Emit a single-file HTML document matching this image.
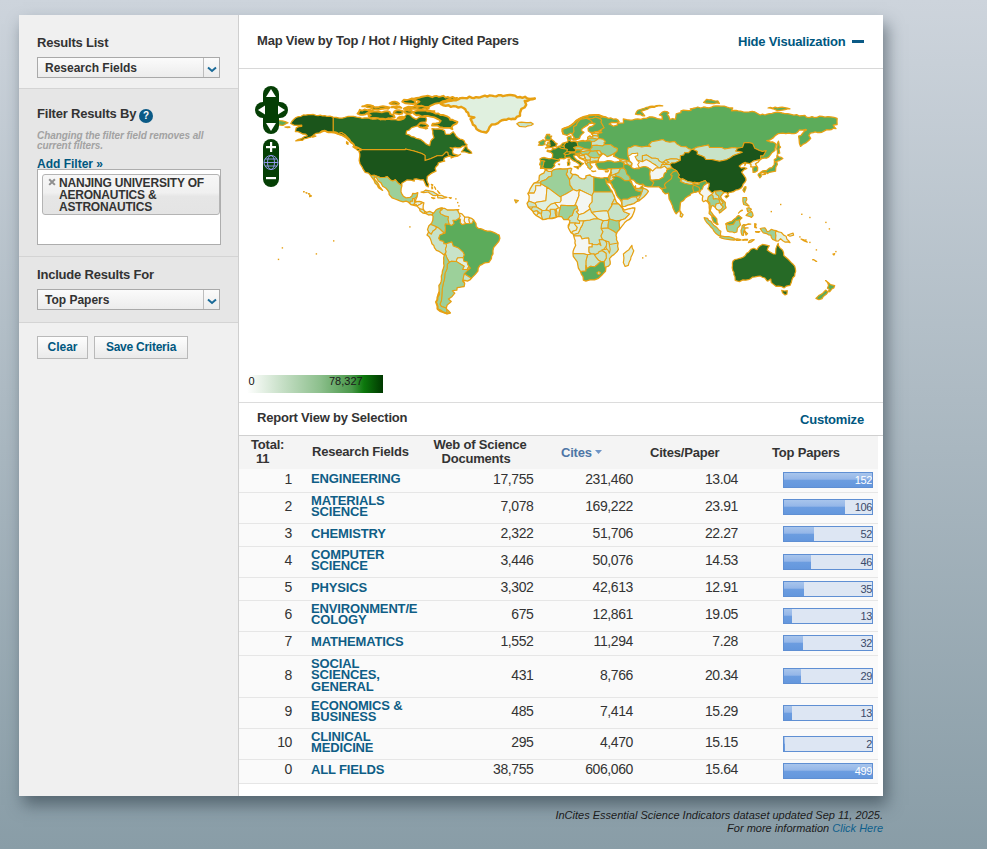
<!DOCTYPE html>
<html><head><meta charset="utf-8">
<style>
*{margin:0;padding:0;box-sizing:border-box}
html,body{width:987px;height:849px;overflow:hidden}
body{font-family:"Liberation Sans",sans-serif;color:#333;background:linear-gradient(to bottom,#cdd4dc 0%,#899da7 100%);position:relative}
.abs{position:absolute;white-space:nowrap}
#panel{position:absolute;left:19px;top:15px;width:864px;height:781px;background:#fff;box-shadow:4px 9px 15px rgba(40,55,65,.55)}
#side{position:absolute;left:0;top:0;width:220px;height:781px;background:#f0f0f0;border-right:1px solid #cfcfcf}
.sec{position:absolute;left:0;width:219px}
.h{font-weight:bold;font-size:13px;color:#333;letter-spacing:-0.2px}
.sel{position:absolute;left:18px;width:183px;height:21px;border:1px solid #a9a9a9;background:linear-gradient(#fbfbfb,#ececec)}
.sel span{position:absolute;left:7px;top:3px;font-size:12px;font-weight:bold;color:#333}
.sel i{position:absolute;right:0;top:0;width:16px;height:19px;border-left:1px solid #bdbdbd}
.blue{color:#00577f}
.btn{position:absolute;height:23px;border:1px solid #b9b9b9;background:linear-gradient(#fdfdfd,#eaeaea);font-size:12px;font-weight:bold;color:#00577f;text-align:center;line-height:21px}

.num{font-size:14px;color:#333;line-height:15px;letter-spacing:-0.4px}
.nm{font-size:13px;font-weight:bold;color:#0f5e86;line-height:11.4px;letter-spacing:-0.15px}
.th{font-size:13px;font-weight:bold;color:#333;line-height:13.5px;letter-spacing:-0.2px}
.bar{width:90px;height:16px;border:1px solid #5f8fd3;background:#dde6f3;overflow:hidden}
.bar b{position:absolute;left:0;top:0;height:14px;background:linear-gradient(#a8c5ec 0%,#94b6e8 45%,#6c9de0 50%,#6497dd 100%)}
.bar span{position:absolute;right:0px;top:1px;font-size:11px;line-height:13px;letter-spacing:-0.4px}
</style></head><body>
<div id="panel">
 <div id="side">
  <div class="sec" style="top:0;height:73px;background:#f0f0f0">
   <div class="abs h" style="left:18px;top:19.5px">Results List</div>
   <div class="sel" style="top:42px"><span>Research Fields</span><i><svg width="16" height="19"><path d="M4 9.5 L8 13 L12 9.5" stroke="#1a6a98" stroke-width="2" fill="none"/></svg></i></div>
  </div>
  <div class="sec" style="top:73px;height:168px;background:#e6e6e6;border-top:1px solid #d4d4d4">
   <div class="abs h" style="left:18px;top:16.5px">Filter Results By</div>
   <div class="abs" style="left:120px;top:20px;width:14px;height:14px;border-radius:50%;background:#0b5a86;color:#fff;font-size:10px;font-weight:bold;text-align:center;line-height:14px">?</div>
   <div class="abs" style="left:18px;top:42px;font-size:10px;font-style:italic;font-weight:bold;color:#a2a2a2;line-height:10px;white-space:normal;width:180px;letter-spacing:-0.08px">Changing the filter field removes all current filters.</div>
   <div class="abs blue" style="left:18px;top:68px;font-size:12px;font-weight:bold">Add Filter &raquo;</div>
   <div class="abs" style="left:18px;top:80px;width:184px;height:76px;background:#fff;border:1px solid #adadad">
     <div class="abs" style="left:4px;top:3.5px;width:178px;height:41px;border:1px solid #b4b4b4;border-radius:3px;background:linear-gradient(#f7f7f7 0%,#f0f0f0 45%,#e6e6e6 55%,#e4e4e4 100%)">
       <svg class="abs" style="left:4.8px;top:3.6px" width="9" height="9"><path d="M1.2 1.2L6.9 6.9M6.9 1.2L1.2 6.9" stroke="#8f8f8f" stroke-width="2"/></svg>
       <div class="abs" style="left:16px;top:2px;font-size:12px;font-weight:bold;color:#333;line-height:12px;white-space:normal;width:170px;letter-spacing:-0.2px">NANJING UNIVERSITY OF AERONAUTICS &amp; ASTRONAUTICS</div>
     </div>
   </div>
  </div>
  <div class="sec" style="top:241px;height:66px;background:#e6e6e6;border-top:1px solid #d4d4d4">
   <div class="abs h" style="left:18px;top:9.5px">Include Results For</div>
   <div class="sel" style="top:32px"><span>Top Papers</span><i><svg width="16" height="19"><path d="M4 9.5 L8 13 L12 9.5" stroke="#1a6a98" stroke-width="2" fill="none"/></svg></i></div>
  </div>
  <div class="sec" style="top:307px;height:474px;background:#f0f0f0;border-top:1px solid #d4d4d4">
   <div class="btn" style="left:18px;top:13px;width:51px">Clear</div>
   <div class="btn" style="left:75px;top:13px;width:94px;letter-spacing:-0.25px">Save Criteria</div>
  </div>
 </div>
 <!-- main -->
 <div id="main" style="position:absolute;left:220px;top:0;width:644px;height:781px">
  <div class="abs h" style="left:18px;top:18px">Map View by Top / Hot / Highly Cited Papers</div>
  <div class="abs blue" style="left:499px;top:19px;font-size:13px;font-weight:bold;letter-spacing:-0.2px">Hide Visualization</div>
  <div class="abs" style="left:613px;top:25px;width:12px;height:3px;background:#0b5a86"></div>
  <div class="abs" style="left:0;top:53px;width:644px;height:1px;background:#d8d8d8"></div>
  <div id="map" class="abs" style="left:0;top:54px;width:644px;height:333px"><svg width="644" height="333" viewBox="0 0 644 333" style="position:absolute;left:0;top:0">
<defs><clipPath id="cna"><path d="M51.7 54.5L53.1 52.2L54.9 50.3L57.0 48.5L59.6 47.6L62.1 47.3L64.3 46.0L66.9 46.1L69.3 45.6L71.9 45.6L74.4 45.5L76.9 46.3L79.1 46.6L81.3 46.1L83.5 46.9L85.7 46.6L87.9 47.4L91.0 47.2L94.1 48.1L97.3 48.5L100.4 49.2L103.2 49.2L105.9 48.4L108.7 47.5L111.6 47.3L114.5 47.3L117.6 48.1L120.8 48.5L123.1 49.3L125.5 49.0L127.9 48.9L130.2 49.2L133.3 50.2L136.5 50.0L138.9 49.5L141.2 50.8L143.6 50.3L145.9 50.7L149.1 50.2L152.2 50.7L154.6 50.3L156.9 50.6L159.3 51.4L161.6 51.1L164.8 50.0L165.6 47.6L167.9 44.8L171.1 46.0L173.4 48.4L177.3 50.3L179.5 48.7L182.0 47.9L184.4 48.3L186.8 48.4L187.5 50.3L186.8 53.1L184.4 53.1L182.0 53.4L180.6 55.2L178.9 56.7L175.8 57.6L172.6 58.6L170.5 60.8L167.6 62.0L167.1 65.2L170.1 65.9L172.6 67.7L175.1 68.0L177.3 69.4L179.7 69.8L182.0 70.7L184.3 72.4L186.3 74.4L188.4 75.7L190.7 76.6L191.2 74.3L191.8 71.9L193.2 70.2L194.9 68.8L193.8 64.9L193.8 62.2L193.0 59.7L196.3 60.0L199.6 59.8L202.7 60.4L205.6 61.7L206.4 65.2L208.7 65.3L211.1 65.2L214.2 62.8L215.8 64.8L217.0 67.1L218.9 68.8L220.9 70.1L223.3 70.6L225.2 71.9L226.1 74.2L228.1 75.7L226.0 76.9L223.7 77.1L221.3 78.7L218.7 78.8L216.2 78.3L213.6 79.2L211.1 78.7L214.2 80.6L213.4 82.3L214.2 85.0L217.0 85.7L219.7 86.4L221.6 85.3L218.9 87.0L215.8 87.5L212.2 89.0L211.9 86.8L210.3 87.2L207.7 87.9L205.3 89.0L204.5 91.6L205.8 92.0L203.2 92.7L199.3 93.8L199.0 95.8L196.8 98.0L196.2 99.4L197.0 102.2L193.7 103.6L191.5 104.9L188.3 107.6L187.9 111.2L188.5 113.4L189.7 115.3L189.3 117.9L187.1 116.7L185.7 113.5L184.4 110.7L181.6 110.9L177.3 109.8L175.0 110.1L175.3 112.0L171.8 111.2L167.9 111.0L166.4 112.0L162.7 114.2L162.9 116.8L162.1 119.8L162.0 123.0L163.0 125.1L164.3 127.2L167.1 128.9L171.1 128.3L172.9 126.9L173.7 124.5L176.3 124.7L178.8 123.7L178.1 127.7L177.0 130.0L176.2 132.7L180.5 132.5L182.8 133.0L184.9 133.9L184.2 136.7L184.1 139.4L185.2 141.8L187.5 143.4L190.7 142.4L194.0 144.0L193.2 146.2L192.3 145.7L189.6 146.0L187.2 144.6L184.2 144.2L181.0 141.8L180.6 139.8L178.0 137.1L175.0 136.3L171.8 135.5L169.5 133.2L167.1 132.1L164.0 132.9L160.9 131.9L158.5 130.8L156.1 130.0L153.0 128.8L150.2 125.6L149.9 123.0L148.4 120.9L146.7 119.0L143.7 117.3L142.0 113.9L139.3 112.0L137.3 108.5L135.3 107.9L135.7 110.4L138.4 113.5L139.7 115.4L140.4 117.7L142.0 119.3L143.6 121.4L142.5 120.6L139.5 118.6L138.3 116.1L136.2 114.3L134.9 111.0L132.3 107.6L131.7 106.5L129.5 104.1L126.2 103.3L124.1 100.2L123.2 98.2L121.1 95.0L120.2 91.6L120.4 89.4L120.8 87.2L120.8 85.0L119.7 81.5L122.4 80.6L119.2 79.0L115.3 77.4L114.5 75.1L112.2 74.0L110.6 71.9L108.3 69.6L106.1 67.8L103.5 66.4L99.6 65.2L95.7 63.6L92.6 63.3L89.4 63.3L85.5 61.7L82.9 62.1L80.8 63.8L77.2 64.4L75.2 65.5L73.7 67.2L71.7 68.2L69.6 68.7L67.4 69.3L65.3 69.7L63.5 71.3L61.2 71.3L59.0 71.7L56.8 71.9L59.6 70.3L62.7 69.6L65.2 67.7L68.2 66.8L66.7 65.2L63.7 65.0L61.2 63.6L58.9 62.7L56.4 62.5L57.2 58.9L59.8 57.6L62.7 57.3L62.7 56.2L60.1 56.5L57.5 56.3L54.9 56.1Z"/></clipPath><clipPath id="csa"><path d="M194.0 144.0L194.9 144.0L197.0 141.0L199.0 139.9L202.1 138.8L203.6 139.0L202.6 141.2L203.6 139.4L205.6 139.3L208.3 141.0L211.9 140.9L214.7 141.0L218.5 140.7L219.9 144.2L222.9 144.9L225.7 148.1L229.1 148.2L233.1 149.7L234.6 150.9L235.8 152.8L237.0 154.7L237.2 157.5L239.4 159.4L241.6 159.7L243.6 160.4L245.6 161.4L248.3 162.1L251.1 162.1L253.5 162.9L255.8 163.8L258.0 165.0L260.2 166.1L260.9 169.3L259.8 172.4L257.1 175.6L254.6 178.7L253.9 181.8L254.0 185.0L252.6 187.1L252.4 189.7L249.9 193.3L245.6 193.9L243.3 195.3L240.9 196.4L239.2 199.1L238.9 202.2L236.2 205.4L233.5 208.1L231.3 210.6L228.4 212.1L226.1 211.5L223.8 211.2L225.7 214.3L225.2 217.5L222.9 217.9L220.5 218.3L218.2 218.7L217.8 221.2L215.6 221.3L213.4 221.9L215.8 224.2L213.1 227.4L211.4 228.8L209.5 230.0L212.2 232.5L210.0 234.4L208.0 236.3L207.2 239.5L208.3 240.7L209.9 242.3L211.4 243.9L208.0 244.6L204.0 243.1L201.6 241.0L198.5 239.9L198.3 237.5L198.0 235.1L197.0 232.9L198.3 230.7L198.5 228.1L199.0 225.3L200.1 222.7L200.1 219.5L199.9 216.4L201.4 214.5L202.1 212.4L202.5 210.1L202.3 207.3L203.2 204.6L203.4 201.9L204.4 199.3L205.1 196.8L204.6 194.1L204.8 191.5L204.6 188.9L205.3 186.2L203.2 184.5L201.4 183.2L199.6 182.1L197.4 181.4L195.4 178.7L194.8 176.4L192.9 174.7L192.3 172.4L191.4 169.9L190.1 167.7L188.0 166.1L189.6 163.0L188.5 160.6L189.9 156.7L191.8 155.1L193.0 153.3L193.8 151.2L194.1 147.3L193.2 146.2Z"/></clipPath><clipPath id="ceu"><path d="M306.7 101.0L305.5 99.7L303.9 99.1L301.5 99.4L301.7 96.7L300.6 95.6L301.7 92.3L300.9 90.0L302.9 88.9L305.3 88.5L307.6 89.2L310.1 89.8L312.7 89.4L313.6 87.3L313.6 85.0L312.0 83.4L308.1 82.3L308.4 81.2L310.7 81.8L313.0 81.0L313.5 79.5L315.8 79.8L318.0 78.7L319.4 77.3L321.2 76.8L322.6 75.5L323.4 74.3L326.5 73.5L328.8 73.0L329.0 71.1L328.2 68.8L329.0 67.9L332.1 66.9L331.7 68.6L332.6 69.3L331.2 71.0L330.9 71.6L332.8 72.7L336.7 71.9L338.3 72.9L341.4 71.9L344.5 71.5L346.3 72.1L348.8 70.8L348.6 68.3L350.8 66.9L352.4 68.0L353.8 67.5L353.7 65.8L352.4 64.9L355.5 64.1L359.5 64.1L362.9 63.5L360.2 62.5L356.3 62.7L353.9 63.5L351.5 63.5L349.3 62.0L349.1 59.5L350.8 57.8L353.3 57.2L355.2 55.5L356.0 54.5L353.5 54.2L350.0 54.5L348.8 56.2L346.1 57.6L343.0 59.7L342.5 61.7L345.0 63.3L343.8 64.4L341.4 66.8L340.6 69.3L338.0 70.4L335.8 70.4L335.1 68.8L333.6 66.0L332.8 64.9L332.0 64.1L330.4 64.9L328.1 66.3L324.3 65.2L323.4 62.5L323.4 60.2L325.7 59.2L329.6 57.8L332.5 56.1L335.1 53.9L337.5 51.5L339.8 50.0L342.2 48.9L345.3 47.6L347.7 47.0L350.0 46.6L352.4 46.2L356.0 45.9L359.5 46.0L363.4 47.4L367.3 48.4L369.6 49.4L372.0 49.0L374.2 50.1L376.9 49.9L379.1 51.1L380.2 52.8L376.7 53.7L372.8 53.4L370.1 55.1L372.8 56.2L374.4 57.2L378.3 56.1L378.3 54.7L381.4 54.2L384.6 53.9L384.3 50.0L387.7 50.7L391.6 51.2L394.0 50.8L396.3 50.2L398.7 50.0L401.9 50.3L404.5 49.4L407.3 49.3L410.5 47.8L413.3 48.0L416.0 48.7L418.3 49.6L420.7 50.0L423.5 50.4L423.0 46.8L420.4 46.0L423.5 43.0L425.4 42.3L427.9 42.6L429.8 44.1L428.2 45.6L429.8 47.1L430.9 50.7L433.6 49.5L436.4 50.4L436.9 47.6L437.2 44.8L439.5 44.1L441.9 43.7L441.9 41.9L444.4 41.1L447.0 41.4L449.5 41.7L452.1 41.3L451.3 39.9L453.7 39.5L456.0 39.0L458.8 38.0L461.8 39.0L464.6 38.0L467.3 38.5L469.9 38.8L472.5 38.2L474.6 37.2L476.9 37.0L479.3 36.9L481.9 37.2L485.2 37.1L488.2 38.2L490.9 39.0L493.7 39.0L492.6 41.8L494.8 41.5L497.1 41.4L499.3 41.9L501.5 42.1L504.4 42.9L507.3 43.1L510.2 42.9L513.3 42.3L515.6 42.8L517.7 44.0L521.2 46.0L523.5 45.2L526.0 46.0L528.2 45.1L530.6 44.7L533.0 44.4L535.3 43.7L537.9 43.2L540.6 43.3L543.1 44.0L545.7 44.6L548.4 44.6L551.0 45.1L554.9 46.2L557.7 45.7L560.4 47.0L563.2 46.6L565.9 46.5L567.5 48.2L570.2 48.6L573.0 47.6L575.7 48.6L578.5 48.1L580.7 47.2L583.2 47.4L586.0 48.1L588.9 47.7L591.8 47.9L595.0 48.4L598.1 49.3L598.0 52.4L598.1 55.5L594.2 56.1L595.7 58.6L597.0 59.7L594.7 59.3L592.5 60.5L590.2 60.9L587.9 60.6L585.4 61.9L582.9 63.3L580.6 63.5L578.3 63.5L576.1 62.8L574.2 63.6L571.4 64.1L569.8 66.4L571.7 69.3L569.8 71.5L566.7 74.0L564.3 75.1L561.5 77.4L560.4 74.3L560.1 70.4L559.6 67.2L562.0 66.4L563.5 64.3L565.2 62.3L567.5 60.9L566.7 60.5L563.6 61.1L560.4 60.9L559.0 62.7L557.3 64.1L555.0 64.7L552.6 64.7L549.7 64.2L546.8 64.7L543.9 64.2L541.6 64.4L539.2 64.6L536.1 66.8L534.5 68.6L532.6 69.9L530.6 71.1L527.8 71.6L531.4 73.0L533.9 73.0L536.1 74.3L537.2 75.5L536.1 79.0L535.9 81.4L532.9 83.7L531.4 85.8L529.8 87.9L527.5 89.2L525.1 89.1L522.7 89.7L520.7 91.1L519.1 93.3L516.5 94.7L517.5 96.7L518.7 98.6L518.5 101.8L516.4 103.0L514.1 103.3L513.8 99.7L514.4 98.2L511.8 97.8L512.1 95.5L510.5 94.7L507.0 93.9L505.8 96.6L506.3 93.4L503.1 94.9L500.3 97.1L502.3 99.1L505.0 98.5L507.8 99.4L504.7 101.0L502.6 103.2L505.2 106.8L506.7 109.1L507.0 111.2L505.9 113.3L504.1 115.1L503.4 117.5L501.6 119.5L499.2 120.6L496.8 121.1L494.8 122.5L492.3 123.2L489.8 123.7L488.7 125.3L487.7 123.7L485.1 123.6L483.2 125.3L481.6 127.7L482.7 130.0L484.5 131.7L486.3 133.5L486.2 136.1L487.1 138.7L484.3 141.0L482.5 142.6L480.5 144.0L480.0 141.5L477.7 140.4L476.1 138.3L473.9 136.5L472.5 137.1L471.9 139.4L471.2 141.8L473.0 144.2L474.9 146.8L476.0 147.8L477.8 150.0L478.0 153.6L479.1 155.3L478.0 155.5L474.5 152.9L473.0 148.9L472.8 147.0L470.1 144.6L470.5 141.0L470.2 138.4L470.2 135.7L469.0 133.2L467.0 131.4L464.6 132.7L463.4 131.6L463.4 129.2L463.9 126.9L460.7 124.5L459.6 122.2L457.6 123.0L455.2 123.4L451.9 124.5L451.3 126.1L448.6 127.4L446.3 129.1L444.6 131.4L441.6 133.2L441.1 137.1L440.8 141.3L438.3 143.5L437.2 144.8L435.6 142.6L434.0 139.1L433.5 136.8L432.5 134.7L431.5 132.3L430.1 130.0L429.8 126.9L429.5 124.1L426.2 124.8L423.8 122.5L423.0 120.6L421.0 118.7L419.9 117.6L417.6 117.9L415.2 117.9L412.2 117.9L409.0 117.8L405.8 117.2L403.9 115.1L401.1 115.7L397.1 113.9L394.8 111.2L391.6 110.4L390.9 111.2L392.6 112.8L393.2 115.1L395.3 118.6L396.5 116.8L396.7 119.5L400.3 119.5L403.4 116.7L404.2 119.0L407.8 120.6L409.4 122.3L407.3 125.3L405.0 127.8L401.9 130.3L399.9 132.0L397.5 132.7L394.8 134.6L391.6 135.5L388.8 136.1L386.1 137.4L383.5 137.6L382.7 135.4L382.5 133.2L380.7 130.0L378.9 128.2L377.5 126.1L376.7 123.7L375.6 120.8L373.6 118.2L372.5 115.6L370.5 113.5L370.3 111.2L369.4 113.9L366.7 110.6L367.2 112.9L368.1 115.1L369.9 117.3L371.2 119.8L372.9 122.0L373.9 124.5L375.2 126.8L375.9 129.2L377.5 133.2L380.7 135.8L383.5 139.0L385.4 141.2L389.3 139.9L391.5 139.5L393.6 138.8L395.9 139.0L395.6 141.2L394.5 144.3L393.2 147.3L391.9 149.2L390.1 150.7L387.8 151.7L386.0 153.2L384.6 155.1L382.6 157.6L380.7 160.2L378.3 162.7L377.0 166.1L377.6 168.5L377.5 170.8L379.1 174.0L378.6 177.2L379.4 180.3L378.3 182.2L376.7 183.9L374.9 185.6L372.8 187.0L370.5 189.7L371.2 192.8L371.2 195.2L369.5 197.2L367.0 198.0L366.5 202.2L364.2 204.6L362.7 206.3L361.1 207.8L359.5 209.3L355.5 210.9L353.2 210.9L350.8 210.9L346.9 212.1L344.4 211.2L344.1 207.7L342.4 205.3L341.4 202.4L339.4 199.1L338.8 196.0L338.3 192.8L335.9 189.7L334.3 187.4L334.0 184.7L334.1 182.4L334.8 180.3L336.7 176.3L335.9 174.0L336.2 171.6L335.4 169.4L334.8 167.1L334.3 165.3L332.1 163.8L330.7 161.4L329.3 158.8L329.2 156.4L330.4 154.4L330.9 151.5L328.8 150.4L324.9 150.7L322.6 147.6L318.6 147.6L316.0 148.9L313.1 149.7L309.2 149.3L306.6 150.3L303.7 150.6L301.7 149.2L299.6 147.9L297.4 146.7L294.8 144.2L293.6 142.1L292.0 140.5L289.3 138.0L288.0 134.4L289.6 132.1L290.1 129.5L290.1 126.9L288.8 124.5L290.3 122.3L291.2 119.8L293.5 116.2L295.1 114.0L297.9 113.1L300.1 111.2L300.1 108.8L300.4 106.5L302.5 105.1L304.8 104.1L306.2 101.3L307.0 101.1L309.5 102.4L312.4 102.4L314.5 100.8L317.1 100.2L321.0 99.7L323.6 100.0L326.2 99.8L328.8 99.6L331.7 99.1L332.8 99.7L332.0 101.8L331.5 103.8L333.6 105.4L336.4 105.4L339.0 106.6L340.3 108.5L342.7 109.7L345.3 109.9L346.9 108.8L346.9 106.9L350.8 105.8L352.5 107.4L354.8 107.9L357.9 108.6L361.0 109.0L363.4 109.2L365.7 108.7L369.2 108.4L370.5 105.7L371.6 103.6L371.9 101.3L372.3 100.0L369.7 99.7L366.5 100.8L363.4 100.4L359.5 100.0L358.2 97.8L356.8 95.5L357.1 93.9L360.2 93.1L361.0 93.0L365.0 92.8L368.9 91.6L372.1 91.9L375.2 93.1L377.9 92.8L380.7 92.3L381.0 90.5L377.5 88.4L374.4 87.2L375.9 84.5L373.6 85.4L371.2 86.4L372.0 86.4L368.1 87.6L366.5 86.1L363.9 84.5L362.0 86.5L360.4 88.4L359.3 90.5L359.5 92.2L356.3 93.4L352.9 93.9L351.0 93.9L351.6 96.3L353.2 97.8L351.1 100.2L348.8 98.3L348.8 97.1L347.2 95.5L346.0 93.1L346.1 91.6L344.5 90.8L340.6 89.2L338.3 86.5L336.9 85.8L334.8 86.4L335.1 88.1L337.5 90.8L340.6 92.3L342.4 93.9L344.5 94.5L342.2 96.3L341.4 97.5L340.1 97.8L340.6 95.5L339.0 94.2L336.7 92.7L334.7 91.9L332.0 90.0L330.4 88.1L327.3 88.7L324.9 89.8L322.6 89.4L320.4 89.8L320.5 91.6L316.8 93.1L315.0 95.5L315.8 96.7L314.2 98.5L312.4 99.9L308.4 99.9Z"/></clipPath><clipPath id="cgb"><path d="M306.6 79.0L310.0 78.5L312.8 78.4L315.5 77.7L317.7 77.1L316.8 76.2L318.2 74.8L316.0 73.7L315.3 72.4L313.1 70.7L312.0 69.6L311.6 68.8L312.7 67.1L310.0 66.9L310.8 65.5L307.6 65.5L306.9 67.2L306.1 68.8L306.9 70.4L307.8 71.5L310.5 71.3L310.2 72.4L310.8 73.7L308.3 73.8L308.9 74.6L307.3 76.2L310.5 76.8L308.4 77.4Z"/></clipPath></defs>
<path d="M51.7 54.5L53.1 52.2L54.9 50.3L57.0 48.5L59.6 47.6L62.1 47.3L64.3 46.0L66.9 46.1L69.3 45.6L71.9 45.6L74.4 45.5L76.9 46.3L79.1 46.6L81.3 46.1L83.5 46.9L85.7 46.6L87.9 47.4L91.0 47.2L94.1 48.1L97.3 48.5L100.4 49.2L103.2 49.2L105.9 48.4L108.7 47.5L111.6 47.3L114.5 47.3L117.6 48.1L120.8 48.5L123.1 49.3L125.5 49.0L127.9 48.9L130.2 49.2L133.3 50.2L136.5 50.0L138.9 49.5L141.2 50.8L143.6 50.3L145.9 50.7L149.1 50.2L152.2 50.7L154.6 50.3L156.9 50.6L159.3 51.4L161.6 51.1L164.8 50.0L165.6 47.6L167.9 44.8L171.1 46.0L173.4 48.4L177.3 50.3L179.5 48.7L182.0 47.9L184.4 48.3L186.8 48.4L187.5 50.3L186.8 53.1L184.4 53.1L182.0 53.4L180.6 55.2L178.9 56.7L175.8 57.6L172.6 58.6L170.5 60.8L167.6 62.0L167.1 65.2L170.1 65.9L172.6 67.7L175.1 68.0L177.3 69.4L179.7 69.8L182.0 70.7L184.3 72.4L186.3 74.4L188.4 75.7L190.7 76.6L191.2 74.3L191.8 71.9L193.2 70.2L194.9 68.8L193.8 64.9L193.8 62.2L193.0 59.7L196.3 60.0L199.6 59.8L202.7 60.4L205.6 61.7L206.4 65.2L208.7 65.3L211.1 65.2L214.2 62.8L215.8 64.8L217.0 67.1L218.9 68.8L220.9 70.1L223.3 70.6L225.2 71.9L226.1 74.2L228.1 75.7L226.0 76.9L223.7 77.1L221.3 78.7L218.7 78.8L216.2 78.3L213.6 79.2L211.1 78.7L214.2 80.6L213.4 82.3L214.2 85.0L217.0 85.7L219.7 86.4L221.6 85.3L218.9 87.0L215.8 87.5L212.2 89.0L211.9 86.8L210.3 87.2L207.7 87.9L205.3 89.0L204.5 91.6L205.8 92.0L203.2 92.7L199.3 93.8L199.0 95.8L196.8 98.0L196.2 99.4L197.0 102.2L193.7 103.6L191.5 104.9L188.3 107.6L187.9 111.2L188.5 113.4L189.7 115.3L189.3 117.9L187.1 116.7L185.7 113.5L184.4 110.7L181.6 110.9L177.3 109.8L175.0 110.1L175.3 112.0L171.8 111.2L167.9 111.0L166.4 112.0L162.7 114.2L162.9 116.8L162.1 119.8L162.0 123.0L163.0 125.1L164.3 127.2L167.1 128.9L171.1 128.3L172.9 126.9L173.7 124.5L176.3 124.7L178.8 123.7L178.1 127.7L177.0 130.0L176.2 132.7L180.5 132.5L182.8 133.0L184.9 133.9L184.2 136.7L184.1 139.4L185.2 141.8L187.5 143.4L190.7 142.4L194.0 144.0L193.2 146.2L192.3 145.7L189.6 146.0L187.2 144.6L184.2 144.2L181.0 141.8L180.6 139.8L178.0 137.1L175.0 136.3L171.8 135.5L169.5 133.2L167.1 132.1L164.0 132.9L160.9 131.9L158.5 130.8L156.1 130.0L153.0 128.8L150.2 125.6L149.9 123.0L148.4 120.9L146.7 119.0L143.7 117.3L142.0 113.9L139.3 112.0L137.3 108.5L135.3 107.9L135.7 110.4L138.4 113.5L139.7 115.4L140.4 117.7L142.0 119.3L143.6 121.4L142.5 120.6L139.5 118.6L138.3 116.1L136.2 114.3L134.9 111.0L132.3 107.6L131.7 106.5L129.5 104.1L126.2 103.3L124.1 100.2L123.2 98.2L121.1 95.0L120.2 91.6L120.4 89.4L120.8 87.2L120.8 85.0L119.7 81.5L122.4 80.6L119.2 79.0L115.3 77.4L114.5 75.1L112.2 74.0L110.6 71.9L108.3 69.6L106.1 67.8L103.5 66.4L99.6 65.2L95.7 63.6L92.6 63.3L89.4 63.3L85.5 61.7L82.9 62.1L80.8 63.8L77.2 64.4L75.2 65.5L73.7 67.2L71.7 68.2L69.6 68.7L67.4 69.3L65.3 69.7L63.5 71.3L61.2 71.3L59.0 71.7L56.8 71.9L59.6 70.3L62.7 69.6L65.2 67.7L68.2 66.8L66.7 65.2L63.7 65.0L61.2 63.6L58.9 62.7L56.4 62.5L57.2 58.9L59.8 57.6L62.7 57.3L62.7 56.2L60.1 56.5L57.5 56.3L54.9 56.1Z" fill="#c8e3c8"/>
<g clip-path="url(#cna)" stroke="#e7a012" stroke-width="1.05" stroke-linejoin="round">
<path d="M94.1 39.8L94.1 48.1L94.1 62.8L97.3 63.3L99.6 64.6L102.8 63.6L105.9 65.7L109.8 69.6L111.4 71.6L103.5 79.0L111.4 80.6L166.4 80.6L166.4 79.9L175.0 82.1L182.8 84.5L186.0 86.4L186.0 91.6L191.5 89.7L195.4 88.1L198.2 86.8L203.2 86.8L204.8 85.3L206.9 83.1L208.7 83.2L209.1 85.8L210.3 87.2L224.4 88.4L237.0 79.0L229.1 39.8Z" fill="#266a26"/>
<path d="M94.1 48.1L94.1 62.8L97.3 63.3L99.6 64.6L102.8 63.6L105.9 65.7L109.8 69.6L111.4 71.6L95.7 79.0L45.5 79.0L45.5 39.8L94.1 39.8Z" fill="#1b551b"/>
<path d="M111.4 80.6L166.4 80.6L166.4 79.9L175.0 82.1L182.8 84.5L186.0 86.4L186.0 91.6L191.5 89.7L195.4 88.1L198.2 86.8L203.2 86.8L204.8 85.3L206.9 83.1L208.7 83.2L209.1 85.8L210.3 87.2L221.3 88.4L221.3 126.1L189.9 126.1L163.2 119.0L162.9 116.8L159.3 114.3L156.3 110.7L153.8 112.0L151.4 110.9L148.3 107.6L145.6 108.4L141.2 108.4L135.4 106.2L131.7 106.5L111.4 106.5Z" fill="#1b551b"/>
<path d="M131.7 106.5L135.4 106.2L141.2 108.4L145.6 108.4L148.3 107.6L151.4 110.9L153.8 112.0L156.3 110.7L159.3 114.3L162.9 116.8L166.4 118.2L174.2 123.0L180.5 123.7L176.9 128.5L175.6 129.6L173.6 129.6L173.6 132.2L171.5 132.2L170.9 133.8L170.7 134.7L166.4 138.7L127.1 118.2L127.1 106.5Z" fill="#9cd09a"/>
<path d="M170.7 134.7L170.9 133.8L171.5 132.2L173.6 132.2L173.6 129.6L175.6 129.6L175.5 132.5L177.0 132.9L175.5 134.6L174.0 136.0L171.1 137.1Z" fill="#c8e3c8"/>
<path d="M175.6 129.6L176.9 128.5L178.9 128.5L177.7 132.4L175.5 132.5Z" fill="#e0f0df"/>
<path d="M174.0 136.0L175.5 134.9L177.3 135.5L177.8 136.8L177.3 137.9L173.4 137.1Z" fill="#e0f0df"/>
<path d="M177.0 132.9L180.5 131.6L185.2 133.2L182.8 134.3L181.3 135.2L179.2 136.3L177.8 136.8L177.3 135.5L175.5 134.9L175.5 133.8Z" fill="#e0f0df"/>
<path d="M177.8 136.8L179.2 136.3L181.3 135.2L182.8 134.3L185.2 133.2L186.8 133.9L186.8 140.2L184.1 140.4L181.0 140.1L179.7 139.4L177.3 137.9Z" fill="#f4f6f3"/>
<path d="M181.0 140.1L184.1 140.4L186.0 142.4L185.3 144.8L184.4 145.7L178.9 143.4L179.7 139.4Z" fill="#c8e3c8"/>
<path d="M186.0 142.4L185.3 144.8L186.8 147.3L194.6 147.3L194.3 145.1L193.2 146.2L194.0 144.0L194.6 141.8L186.8 141.8Z" fill="#c8e3c8"/>
</g>
<path d="M51.7 54.5L53.1 52.2L54.9 50.3L57.0 48.5L59.6 47.6L62.1 47.3L64.3 46.0L66.9 46.1L69.3 45.6L71.9 45.6L74.4 45.5L76.9 46.3L79.1 46.6L81.3 46.1L83.5 46.9L85.7 46.6L87.9 47.4L91.0 47.2L94.1 48.1L97.3 48.5L100.4 49.2L103.2 49.2L105.9 48.4L108.7 47.5L111.6 47.3L114.5 47.3L117.6 48.1L120.8 48.5L123.1 49.3L125.5 49.0L127.9 48.9L130.2 49.2L133.3 50.2L136.5 50.0L138.9 49.5L141.2 50.8L143.6 50.3L145.9 50.7L149.1 50.2L152.2 50.7L154.6 50.3L156.9 50.6L159.3 51.4L161.6 51.1L164.8 50.0L165.6 47.6L167.9 44.8L171.1 46.0L173.4 48.4L177.3 50.3L179.5 48.7L182.0 47.9L184.4 48.3L186.8 48.4L187.5 50.3L186.8 53.1L184.4 53.1L182.0 53.4L180.6 55.2L178.9 56.7L175.8 57.6L172.6 58.6L170.5 60.8L167.6 62.0L167.1 65.2L170.1 65.9L172.6 67.7L175.1 68.0L177.3 69.4L179.7 69.8L182.0 70.7L184.3 72.4L186.3 74.4L188.4 75.7L190.7 76.6L191.2 74.3L191.8 71.9L193.2 70.2L194.9 68.8L193.8 64.9L193.8 62.2L193.0 59.7L196.3 60.0L199.6 59.8L202.7 60.4L205.6 61.7L206.4 65.2L208.7 65.3L211.1 65.2L214.2 62.8L215.8 64.8L217.0 67.1L218.9 68.8L220.9 70.1L223.3 70.6L225.2 71.9L226.1 74.2L228.1 75.7L226.0 76.9L223.7 77.1L221.3 78.7L218.7 78.8L216.2 78.3L213.6 79.2L211.1 78.7L214.2 80.6L213.4 82.3L214.2 85.0L217.0 85.7L219.7 86.4L221.6 85.3L218.9 87.0L215.8 87.5L212.2 89.0L211.9 86.8L210.3 87.2L207.7 87.9L205.3 89.0L204.5 91.6L205.8 92.0L203.2 92.7L199.3 93.8L199.0 95.8L196.8 98.0L196.2 99.4L197.0 102.2L193.7 103.6L191.5 104.9L188.3 107.6L187.9 111.2L188.5 113.4L189.7 115.3L189.3 117.9L187.1 116.7L185.7 113.5L184.4 110.7L181.6 110.9L177.3 109.8L175.0 110.1L175.3 112.0L171.8 111.2L167.9 111.0L166.4 112.0L162.7 114.2L162.9 116.8L162.1 119.8L162.0 123.0L163.0 125.1L164.3 127.2L167.1 128.9L171.1 128.3L172.9 126.9L173.7 124.5L176.3 124.7L178.8 123.7L178.1 127.7L177.0 130.0L176.2 132.7L180.5 132.5L182.8 133.0L184.9 133.9L184.2 136.7L184.1 139.4L185.2 141.8L187.5 143.4L190.7 142.4L194.0 144.0L193.2 146.2L192.3 145.7L189.6 146.0L187.2 144.6L184.2 144.2L181.0 141.8L180.6 139.8L178.0 137.1L175.0 136.3L171.8 135.5L169.5 133.2L167.1 132.1L164.0 132.9L160.9 131.9L158.5 130.8L156.1 130.0L153.0 128.8L150.2 125.6L149.9 123.0L148.4 120.9L146.7 119.0L143.7 117.3L142.0 113.9L139.3 112.0L137.3 108.5L135.3 107.9L135.7 110.4L138.4 113.5L139.7 115.4L140.4 117.7L142.0 119.3L143.6 121.4L142.5 120.6L139.5 118.6L138.3 116.1L136.2 114.3L134.9 111.0L132.3 107.6L131.7 106.5L129.5 104.1L126.2 103.3L124.1 100.2L123.2 98.2L121.1 95.0L120.2 91.6L120.4 89.4L120.8 87.2L120.8 85.0L119.7 81.5L122.4 80.6L119.2 79.0L115.3 77.4L114.5 75.1L112.2 74.0L110.6 71.9L108.3 69.6L106.1 67.8L103.5 66.4L99.6 65.2L95.7 63.6L92.6 63.3L89.4 63.3L85.5 61.7L82.9 62.1L80.8 63.8L77.2 64.4L75.2 65.5L73.7 67.2L71.7 68.2L69.6 68.7L67.4 69.3L65.3 69.7L63.5 71.3L61.2 71.3L59.0 71.7L56.8 71.9L59.6 70.3L62.7 69.6L65.2 67.7L68.2 66.8L66.7 65.2L63.7 65.0L61.2 63.6L58.9 62.7L56.4 62.5L57.2 58.9L59.8 57.6L62.7 57.3L62.7 56.2L60.1 56.5L57.5 56.3L54.9 56.1Z" fill="none" stroke="#e7a012" stroke-width="1.3" stroke-linejoin="round"/>
<g stroke="#e7a012" stroke-width="1.9" stroke-linejoin="round">
<path d="M213.4 60.2L210.9 58.9L208.0 58.9L204.0 58.7L201.0 58.3L198.5 56.5L195.8 56.6L193.0 56.5L193.8 54.7L197.0 54.4L200.1 53.9L201.7 51.8L199.3 50.3L195.4 48.4L191.5 47.6L188.6 46.9L185.7 47.0L182.8 47.6L180.2 46.3L177.3 46.3L175.0 44.8L174.2 42.9L177.3 41.8L180.5 41.3L183.6 41.6L186.4 41.6L189.1 41.8L191.9 42.3L194.6 43.4L196.8 44.6L199.3 44.5L201.4 46.0L204.0 46.0L208.0 47.3L210.3 48.7L211.1 50.7L213.6 50.8L215.8 52.0L218.5 52.9L217.4 54.7L214.2 56.2L212.7 57.8Z" fill="#266a26"/>
<path d="M188.3 42.4L191.5 42.2L194.6 43.2L195.4 42.1L193.0 42.3L190.7 41.6Z" fill="#266a26"/>
<path d="M178.9 56.5L181.3 54.0L185.2 54.7L187.4 55.4L189.1 57.0L185.2 58.7L182.8 58.5L180.5 58.1Z" fill="#266a26"/>
<path d="M184.4 58.7L188.3 59.1L186.8 59.7Z" fill="#266a26"/>
<path d="M118.5 44.6L121.6 45.9L124.0 45.8L126.3 45.4L128.7 43.7L131.0 42.1L134.2 42.1L131.0 40.8L128.3 41.1L125.5 40.5L123.2 41.6L120.8 40.8L120.0 42.9Z" fill="#266a26"/>
<path d="M129.5 46.8L131.0 49.2L133.8 48.9L136.5 48.9L138.9 49.1L141.2 49.8L143.9 49.8L146.5 50.3L149.1 49.3L151.3 49.4L153.5 48.7L155.7 48.4L154.6 46.0L151.4 45.2L150.6 42.9L148.3 42.1L145.5 42.5L142.8 43.4L139.7 42.7L135.7 42.4L132.9 42.7L130.2 43.7L128.7 44.8L131.8 46.3Z" fill="#266a26"/>
<path d="M123.2 37.4L126.1 37.1L128.7 38.3L131.6 38.4L134.2 37.1L131.0 36.1L128.2 36.0L125.5 36.8Z" fill="#266a26"/>
<path d="M131.8 38.8L134.0 40.2L136.5 40.4L139.1 40.8L141.5 40.0L144.0 39.9L146.5 39.3L149.1 39.9L150.6 38.5L146.7 37.6L144.0 37.3L141.2 37.6L138.9 38.3L136.5 38.3L134.2 37.6Z" fill="#266a26"/>
<path d="M152.2 38.2L154.7 38.2L156.9 39.3L159.6 38.4L162.4 38.8L160.1 37.4L157.3 37.8L154.6 37.6Z" fill="#266a26"/>
<path d="M164.8 39.8L168.7 40.4L169.5 39.1L165.6 39.1Z" fill="#266a26"/>
<path d="M166.4 39.0L168.9 38.9L171.1 40.4L173.4 39.5L175.8 39.8L178.1 39.8L180.5 40.5L183.1 40.2L185.7 39.6L188.3 40.4L189.9 39.0L186.8 37.7L184.0 37.0L181.3 37.3L178.5 38.1L175.8 37.4L172.7 38.0L169.5 37.7Z" fill="#266a26"/>
<path d="M175.8 36.6L178.2 36.6L180.5 36.9L182.9 36.8L185.2 37.7L187.7 37.9L190.1 37.6L192.3 36.3L196.2 34.6L198.5 34.2L200.9 33.9L204.0 32.2L206.4 31.8L208.6 30.7L211.0 30.3L213.4 30.6L215.7 29.5L218.2 28.9L215.8 29.1L213.5 27.9L211.0 28.8L208.7 28.0L206.5 28.6L204.4 26.8L202.2 27.4L199.9 27.9L197.8 27.0L195.5 27.1L193.3 28.2L191.0 27.4L188.7 26.7L186.5 27.1L184.3 27.5L182.0 28.0L179.8 28.8L177.4 29.0L175.1 29.7L172.6 29.5L174.8 30.8L177.3 31.1L180.5 32.7L177.3 34.7Z" fill="#266a26"/>
<path d="M166.4 34.3L168.7 34.5L171.1 34.7L173.9 35.0L176.6 34.3L175.8 31.9L171.8 30.0L169.5 30.6L167.2 31.0L164.8 30.8L163.2 32.7Z" fill="#266a26"/>
<path d="M150.6 34.3L152.9 35.3L155.4 35.2L157.8 35.8L160.1 34.7L158.5 33.5L155.8 32.6L153.0 33.0Z" fill="#266a26"/>
<path d="M154.6 44.0L158.5 44.9L160.9 45.2L163.2 44.5L164.0 42.1L160.1 41.3L157.6 41.3L155.4 42.4Z" fill="#266a26"/>
<path d="M165.6 43.7L168.7 44.5L171.1 44.5L173.4 43.7L172.6 41.6L170.2 41.9L167.9 41.2L165.6 42.1Z" fill="#266a26"/>
<path d="M158.5 49.5L162.4 50.0L165.9 48.4L163.2 47.8L160.1 48.2Z" fill="#266a26"/>
</g>
<g stroke="#e7a012" stroke-width="2.4" stroke-linejoin="round">
<path d="M247.2 63.6L244.9 63.0L242.4 62.6L240.1 61.7L237.5 60.0L236.2 57.0L233.9 55.6L233.1 53.1L231.5 50.0L235.4 48.4L232.6 48.0L229.9 46.8L229.1 43.7L227.2 42.4L226.3 40.3L224.4 39.0L222.0 37.8L219.4 38.6L217.0 37.4L214.5 37.1L211.9 37.9L209.6 36.3L206.7 36.7L204.1 36.3L201.7 35.0L204.1 33.7L206.6 32.9L209.2 32.1L211.9 31.9L214.3 31.4L216.8 31.3L219.1 30.4L221.3 29.1L223.5 28.9L225.8 29.1L228.1 29.3L230.2 27.7L232.5 28.7L234.8 29.1L237.0 28.1L239.3 28.5L241.5 28.2L243.7 27.4L245.9 26.6L248.3 27.6L250.4 26.5L252.7 26.6L255.0 27.1L257.2 27.4L259.4 26.2L261.7 26.2L263.9 27.2L266.2 26.7L268.4 26.2L271.0 25.9L273.5 26.2L276.0 26.6L278.3 28.4L281.0 28.0L283.4 28.8L286.0 27.8L288.3 29.4L290.8 30.0L293.4 29.6L295.9 29.5L293.4 30.4L290.8 30.6L288.4 32.0L285.7 31.9L287.2 35.8L285.5 38.5L282.5 39.8L281.0 43.7L281.0 46.8L278.1 47.6L276.2 50.0L274.0 49.8L271.9 50.2L269.6 49.6L267.5 50.7L265.3 50.7L262.8 51.2L260.8 52.5L259.0 54.2L256.0 55.4L252.7 55.5L250.3 58.6L249.2 61.4Z" fill="#e0f0df"/>
</g>
<g stroke="#e7a012" stroke-width="1.2" stroke-linejoin="round">
<path d="M113.8 77.7L116.3 79.4L118.5 81.4L121.9 81.7L120.0 79.3L116.8 78.8Z" fill="#266a26"/>
<path d="M107.5 72.7L109.0 73.5L109.0 75.5L107.5 74.6Z" fill="#266a26"/>
<path d="M222.4 82.8L224.2 80.7L225.6 78.4L227.6 76.5L228.4 79.8L230.4 81.3L232.3 82.9L232.8 84.2L230.5 84.4L228.4 83.7L225.5 82.8Z" fill="#266a26"/>
<path d="M280.2 57.0L277.8 54.7L280.2 53.3L282.5 53.2L284.9 53.4L287.2 53.6L289.6 53.6L292.0 53.4L294.3 55.1L292.0 56.5L289.1 56.8L286.5 58.0L283.3 57.7L280.2 57.3Z" fill="#c8e3c8"/>
<path d="M182.0 123.1L184.6 122.6L186.8 121.1L189.1 121.5L191.5 122.1L193.8 122.5L196.4 124.2L199.0 125.8L196.5 126.6L193.8 126.3L191.4 124.7L189.1 123.0L186.8 123.4L184.5 123.7L182.2 123.1Z" fill="#c8e3c8"/>
<path d="M198.5 126.4L202.5 126.3L205.1 127.6L208.0 128.3L205.6 128.9L203.3 129.3L201.1 128.9L198.8 128.8Z" fill="#e0f0df"/>
<path d="M192.6 128.6L195.9 129.1L194.6 129.6Z" fill="#e0f0df"/>
<path d="M210.0 128.5L212.5 128.8L211.6 129.4Z" fill="#c8e3c8"/>
<path d="M192.3 115.4L193.8 115.9L193.4 117.0Z" fill="#e0f0df"/>
<path d="M192.7 117.9L193.7 119.0L193.0 119.8Z" fill="#e0f0df"/>
<path d="M195.4 117.8L196.2 118.9L196.8 120.4Z" fill="#e0f0df"/>
<path d="M198.5 121.7L200.1 124.2L200.9 124.5Z" fill="#e0f0df"/>
<path d="M32.9 49.3L35.4 50.3L38.1 50.9L40.8 51.5L43.5 51.9L46.2 52.6L49.1 53.7L47.0 54.7L43.9 56.5L41.5 56.1L39.2 55.8L36.0 55.5L32.9 55.5L33.2 52.4Z" fill="#5cac5b"/>
<path d="M70.7 125.8L72.5 126.9L70.7 127.8Z" fill="#1b551b"/>
<path d="M69.5 124.5L70.6 124.8L69.8 125.2Z" fill="#1b551b"/>
<path d="M67.0 123.6L68.1 124.1L67.3 124.1Z" fill="#1b551b"/>
<path d="M64.6 122.6L65.4 122.8L64.9 123.1Z" fill="#1b551b"/>
<path d="M50.2 57.8L51.0 58.3L48.3 58.6L45.8 58.0Z" fill="#1b551b"/>
<path d="M74.5 66.6L76.9 67.2L73.7 68.3Z" fill="#1b551b"/>
</g>
<path d="M194.0 144.0L194.9 144.0L197.0 141.0L199.0 139.9L202.1 138.8L203.6 139.0L202.6 141.2L203.6 139.4L205.6 139.3L208.3 141.0L211.9 140.9L214.7 141.0L218.5 140.7L219.9 144.2L222.9 144.9L225.7 148.1L229.1 148.2L233.1 149.7L234.6 150.9L235.8 152.8L237.0 154.7L237.2 157.5L239.4 159.4L241.6 159.7L243.6 160.4L245.6 161.4L248.3 162.1L251.1 162.1L253.5 162.9L255.8 163.8L258.0 165.0L260.2 166.1L260.9 169.3L259.8 172.4L257.1 175.6L254.6 178.7L253.9 181.8L254.0 185.0L252.6 187.1L252.4 189.7L249.9 193.3L245.6 193.9L243.3 195.3L240.9 196.4L239.2 199.1L238.9 202.2L236.2 205.4L233.5 208.1L231.3 210.6L228.4 212.1L226.1 211.5L223.8 211.2L225.7 214.3L225.2 217.5L222.9 217.9L220.5 218.3L218.2 218.7L217.8 221.2L215.6 221.3L213.4 221.9L215.8 224.2L213.1 227.4L211.4 228.8L209.5 230.0L212.2 232.5L210.0 234.4L208.0 236.3L207.2 239.5L208.3 240.7L209.9 242.3L211.4 243.9L208.0 244.6L204.0 243.1L201.6 241.0L198.5 239.9L198.3 237.5L198.0 235.1L197.0 232.9L198.3 230.7L198.5 228.1L199.0 225.3L200.1 222.7L200.1 219.5L199.9 216.4L201.4 214.5L202.1 212.4L202.5 210.1L202.3 207.3L203.2 204.6L203.4 201.9L204.4 199.3L205.1 196.8L204.6 194.1L204.8 191.5L204.6 188.9L205.3 186.2L203.2 184.5L201.4 183.2L199.6 182.1L197.4 181.4L195.4 178.7L194.8 176.4L192.9 174.7L192.3 172.4L191.4 169.9L190.1 167.7L188.0 166.1L189.6 163.0L188.5 160.6L189.9 156.7L191.8 155.1L193.0 153.3L193.8 151.2L194.1 147.3L193.2 146.2Z" fill="#c8e3c8"/>
<g clip-path="url(#csa)" stroke="#e7a012" stroke-width="1.05" stroke-linejoin="round">
<path d="M234.5 150.9L233.1 153.9L230.6 154.2L226.8 154.5L223.2 155.6L221.3 153.6L221.6 150.4L220.0 149.3L216.9 151.2L213.8 151.2L215.0 154.4L212.7 156.4L210.5 155.6L206.4 154.7L205.9 155.9L206.5 159.4L205.8 164.1L201.0 165.7L199.6 169.3L201.0 171.6L204.7 172.4L204.8 174.8L207.2 174.8L212.7 172.9L214.2 177.1L218.9 178.7L221.0 180.3L224.0 183.1L225.2 185.8L224.1 188.6L224.1 188.6L224.8 192.2L228.2 193.0L228.5 195.2L229.8 197.5L231.2 199.1L228.4 201.5L225.1 204.9L227.6 206.2L231.5 208.7L231.7 210.4L237.0 212.4L268.4 173.2L244.9 149.7Z" fill="#5cac5b"/>
<path d="M203.6 139.0L202.1 140.1L200.9 143.1L201.8 144.9L205.6 146.7L209.5 147.8L209.1 150.4L209.8 153.6L210.5 155.6L206.4 154.7L205.9 155.9L206.5 159.4L205.8 164.1L204.5 163.5L200.1 159.4L197.3 157.7L193.8 156.2L191.5 155.6L186.8 155.9L186.8 146.5L193.2 146.2L194.0 144.0L196.2 138.7L203.6 137.9Z" fill="#9cd09a"/>
<path d="M210.5 155.6L209.8 153.6L209.1 150.4L209.5 147.8L205.6 146.7L201.8 144.9L200.9 143.1L202.1 140.1L203.6 139.0L203.6 139.0L202.5 137.1L224.4 138.7L221.3 144.2L220.5 144.9L221.3 147.3L220.0 149.3L216.9 151.2L213.8 151.2L215.0 154.4L212.7 156.4Z" fill="#c8e3c8"/>
<path d="M221.3 144.2L220.5 144.9L221.3 147.3L220.0 149.3L221.6 150.4L221.3 153.6L223.2 155.6L226.8 154.5L225.2 152.0L225.7 148.1L227.6 143.4Z" fill="#f4f6f3"/>
<path d="M225.7 148.1L225.2 152.0L226.8 154.5L230.6 154.2L229.9 150.4L230.7 148.4L230.7 143.4L226.0 143.4Z" fill="#f4f6f3"/>
<path d="M230.7 148.4L229.9 150.4L230.6 154.2L233.1 153.9L234.5 150.9L237.0 148.1L230.7 144.9Z" fill="#e0f0df"/>
<path d="M191.5 155.6L193.8 156.2L197.3 157.7L197.0 159.9L193.8 162.2L192.3 165.3L189.4 163.0L186.8 163.0L186.8 155.1Z" fill="#c8e3c8"/>
<path d="M189.4 163.0L192.3 165.3L193.8 162.2L197.0 159.9L197.3 157.7L200.1 159.4L204.5 163.5L205.8 164.1L201.0 165.7L199.6 169.3L201.0 171.6L204.7 172.4L204.8 174.8L207.2 174.8L207.6 177.1L206.4 180.3L207.2 182.6L205.6 185.0L205.1 186.2L189.9 187.3L183.6 165.3Z" fill="#c8e3c8"/>
<path d="M207.2 174.8L212.7 172.9L214.2 177.1L218.9 178.7L221.0 180.3L224.0 183.1L225.2 185.8L224.1 188.6L224.1 188.6L218.5 188.9L217.2 192.4L212.4 192.2L210.3 193.3L208.0 188.9L206.4 185.0L207.2 182.6L206.4 180.3L207.6 177.1Z" fill="#c8e3c8"/>
<path d="M224.1 188.6L224.8 192.2L228.2 193.0L228.5 195.2L229.8 197.5L229.8 197.5L228.1 200.5L223.5 200.4L225.1 197.2L217.2 192.4L217.2 192.4L218.5 188.9L224.1 188.6Z" fill="#e0f0df"/>
<path d="M225.1 204.9L227.6 206.2L231.5 208.7L231.7 210.4L233.9 214.0L223.7 212.4L224.0 210.1Z" fill="#c8e3c8"/>
<path d="M210.3 193.3L212.4 192.2L217.2 192.4L217.2 192.4L225.1 197.2L223.5 200.4L228.1 200.5L229.8 197.5L231.2 199.1L228.4 201.5L225.1 204.9L224.0 210.1L223.7 212.4L229.1 217.2L221.3 245.4L211.9 246.2L207.8 245.4L207.8 239.6L207.2 239.1L202.5 237.6L200.9 235.2L202.5 231.3L202.8 227.4L203.2 220.3L204.0 215.6L205.6 209.3L205.9 204.6L208.0 199.9L208.3 195.2L210.3 193.3Z" fill="#9cd09a"/>
<path d="M205.1 186.2L206.4 185.0L208.0 188.9L210.3 193.3L210.3 193.3L208.3 195.2L208.0 199.9L205.9 204.6L205.6 209.3L204.0 215.6L203.2 220.3L202.8 227.4L202.5 231.3L200.9 235.2L202.5 237.6L207.2 239.1L207.8 239.6L207.8 245.4L189.9 245.4L189.9 185.8Z" fill="#9cd09a"/>
</g>
<path d="M194.0 144.0L194.9 144.0L197.0 141.0L199.0 139.9L202.1 138.8L203.6 139.0L202.6 141.2L203.6 139.4L205.6 139.3L208.3 141.0L211.9 140.9L214.7 141.0L218.5 140.7L219.9 144.2L222.9 144.9L225.7 148.1L229.1 148.2L233.1 149.7L234.6 150.9L235.8 152.8L237.0 154.7L237.2 157.5L239.4 159.4L241.6 159.7L243.6 160.4L245.6 161.4L248.3 162.1L251.1 162.1L253.5 162.9L255.8 163.8L258.0 165.0L260.2 166.1L260.9 169.3L259.8 172.4L257.1 175.6L254.6 178.7L253.9 181.8L254.0 185.0L252.6 187.1L252.4 189.7L249.9 193.3L245.6 193.9L243.3 195.3L240.9 196.4L239.2 199.1L238.9 202.2L236.2 205.4L233.5 208.1L231.3 210.6L228.4 212.1L226.1 211.5L223.8 211.2L225.7 214.3L225.2 217.5L222.9 217.9L220.5 218.3L218.2 218.7L217.8 221.2L215.6 221.3L213.4 221.9L215.8 224.2L213.1 227.4L211.4 228.8L209.5 230.0L212.2 232.5L210.0 234.4L208.0 236.3L207.2 239.5L208.3 240.7L209.9 242.3L211.4 243.9L208.0 244.6L204.0 243.1L201.6 241.0L198.5 239.9L198.3 237.5L198.0 235.1L197.0 232.9L198.3 230.7L198.5 228.1L199.0 225.3L200.1 222.7L200.1 219.5L199.9 216.4L201.4 214.5L202.1 212.4L202.5 210.1L202.3 207.3L203.2 204.6L203.4 201.9L204.4 199.3L205.1 196.8L204.6 194.1L204.8 191.5L204.6 188.9L205.3 186.2L203.2 184.5L201.4 183.2L199.6 182.1L197.4 181.4L195.4 178.7L194.8 176.4L192.9 174.7L192.3 172.4L191.4 169.9L190.1 167.7L188.0 166.1L189.6 163.0L188.5 160.6L189.9 156.7L191.8 155.1L193.0 153.3L193.8 151.2L194.1 147.3L193.2 146.2Z" fill="none" stroke="#e7a012" stroke-width="1.3" stroke-linejoin="round"/>
<g stroke="#e7a012" stroke-width="1.2" stroke-linejoin="round">
<path d="M218.3 141.6L219.9 140.5L218.3 140.5Z" fill="#9cd09a"/>
</g>
<path d="M306.7 101.0L305.5 99.7L303.9 99.1L301.5 99.4L301.7 96.7L300.6 95.6L301.7 92.3L300.9 90.0L302.9 88.9L305.3 88.5L307.6 89.2L310.1 89.8L312.7 89.4L313.6 87.3L313.6 85.0L312.0 83.4L308.1 82.3L308.4 81.2L310.7 81.8L313.0 81.0L313.5 79.5L315.8 79.8L318.0 78.7L319.4 77.3L321.2 76.8L322.6 75.5L323.4 74.3L326.5 73.5L328.8 73.0L329.0 71.1L328.2 68.8L329.0 67.9L332.1 66.9L331.7 68.6L332.6 69.3L331.2 71.0L330.9 71.6L332.8 72.7L336.7 71.9L338.3 72.9L341.4 71.9L344.5 71.5L346.3 72.1L348.8 70.8L348.6 68.3L350.8 66.9L352.4 68.0L353.8 67.5L353.7 65.8L352.4 64.9L355.5 64.1L359.5 64.1L362.9 63.5L360.2 62.5L356.3 62.7L353.9 63.5L351.5 63.5L349.3 62.0L349.1 59.5L350.8 57.8L353.3 57.2L355.2 55.5L356.0 54.5L353.5 54.2L350.0 54.5L348.8 56.2L346.1 57.6L343.0 59.7L342.5 61.7L345.0 63.3L343.8 64.4L341.4 66.8L340.6 69.3L338.0 70.4L335.8 70.4L335.1 68.8L333.6 66.0L332.8 64.9L332.0 64.1L330.4 64.9L328.1 66.3L324.3 65.2L323.4 62.5L323.4 60.2L325.7 59.2L329.6 57.8L332.5 56.1L335.1 53.9L337.5 51.5L339.8 50.0L342.2 48.9L345.3 47.6L347.7 47.0L350.0 46.6L352.4 46.2L356.0 45.9L359.5 46.0L363.4 47.4L367.3 48.4L369.6 49.4L372.0 49.0L374.2 50.1L376.9 49.9L379.1 51.1L380.2 52.8L376.7 53.7L372.8 53.4L370.1 55.1L372.8 56.2L374.4 57.2L378.3 56.1L378.3 54.7L381.4 54.2L384.6 53.9L384.3 50.0L387.7 50.7L391.6 51.2L394.0 50.8L396.3 50.2L398.7 50.0L401.9 50.3L404.5 49.4L407.3 49.3L410.5 47.8L413.3 48.0L416.0 48.7L418.3 49.6L420.7 50.0L423.5 50.4L423.0 46.8L420.4 46.0L423.5 43.0L425.4 42.3L427.9 42.6L429.8 44.1L428.2 45.6L429.8 47.1L430.9 50.7L433.6 49.5L436.4 50.4L436.9 47.6L437.2 44.8L439.5 44.1L441.9 43.7L441.9 41.9L444.4 41.1L447.0 41.4L449.5 41.7L452.1 41.3L451.3 39.9L453.7 39.5L456.0 39.0L458.8 38.0L461.8 39.0L464.6 38.0L467.3 38.5L469.9 38.8L472.5 38.2L474.6 37.2L476.9 37.0L479.3 36.9L481.9 37.2L485.2 37.1L488.2 38.2L490.9 39.0L493.7 39.0L492.6 41.8L494.8 41.5L497.1 41.4L499.3 41.9L501.5 42.1L504.4 42.9L507.3 43.1L510.2 42.9L513.3 42.3L515.6 42.8L517.7 44.0L521.2 46.0L523.5 45.2L526.0 46.0L528.2 45.1L530.6 44.7L533.0 44.4L535.3 43.7L537.9 43.2L540.6 43.3L543.1 44.0L545.7 44.6L548.4 44.6L551.0 45.1L554.9 46.2L557.7 45.7L560.4 47.0L563.2 46.6L565.9 46.5L567.5 48.2L570.2 48.6L573.0 47.6L575.7 48.6L578.5 48.1L580.7 47.2L583.2 47.4L586.0 48.1L588.9 47.7L591.8 47.9L595.0 48.4L598.1 49.3L598.0 52.4L598.1 55.5L594.2 56.1L595.7 58.6L597.0 59.7L594.7 59.3L592.5 60.5L590.2 60.9L587.9 60.6L585.4 61.9L582.9 63.3L580.6 63.5L578.3 63.5L576.1 62.8L574.2 63.6L571.4 64.1L569.8 66.4L571.7 69.3L569.8 71.5L566.7 74.0L564.3 75.1L561.5 77.4L560.4 74.3L560.1 70.4L559.6 67.2L562.0 66.4L563.5 64.3L565.2 62.3L567.5 60.9L566.7 60.5L563.6 61.1L560.4 60.9L559.0 62.7L557.3 64.1L555.0 64.7L552.6 64.7L549.7 64.2L546.8 64.7L543.9 64.2L541.6 64.4L539.2 64.6L536.1 66.8L534.5 68.6L532.6 69.9L530.6 71.1L527.8 71.6L531.4 73.0L533.9 73.0L536.1 74.3L537.2 75.5L536.1 79.0L535.9 81.4L532.9 83.7L531.4 85.8L529.8 87.9L527.5 89.2L525.1 89.1L522.7 89.7L520.7 91.1L519.1 93.3L516.5 94.7L517.5 96.7L518.7 98.6L518.5 101.8L516.4 103.0L514.1 103.3L513.8 99.7L514.4 98.2L511.8 97.8L512.1 95.5L510.5 94.7L507.0 93.9L505.8 96.6L506.3 93.4L503.1 94.9L500.3 97.1L502.3 99.1L505.0 98.5L507.8 99.4L504.7 101.0L502.6 103.2L505.2 106.8L506.7 109.1L507.0 111.2L505.9 113.3L504.1 115.1L503.4 117.5L501.6 119.5L499.2 120.6L496.8 121.1L494.8 122.5L492.3 123.2L489.8 123.7L488.7 125.3L487.7 123.7L485.1 123.6L483.2 125.3L481.6 127.7L482.7 130.0L484.5 131.7L486.3 133.5L486.2 136.1L487.1 138.7L484.3 141.0L482.5 142.6L480.5 144.0L480.0 141.5L477.7 140.4L476.1 138.3L473.9 136.5L472.5 137.1L471.9 139.4L471.2 141.8L473.0 144.2L474.9 146.8L476.0 147.8L477.8 150.0L478.0 153.6L479.1 155.3L478.0 155.5L474.5 152.9L473.0 148.9L472.8 147.0L470.1 144.6L470.5 141.0L470.2 138.4L470.2 135.7L469.0 133.2L467.0 131.4L464.6 132.7L463.4 131.6L463.4 129.2L463.9 126.9L460.7 124.5L459.6 122.2L457.6 123.0L455.2 123.4L451.9 124.5L451.3 126.1L448.6 127.4L446.3 129.1L444.6 131.4L441.6 133.2L441.1 137.1L440.8 141.3L438.3 143.5L437.2 144.8L435.6 142.6L434.0 139.1L433.5 136.8L432.5 134.7L431.5 132.3L430.1 130.0L429.8 126.9L429.5 124.1L426.2 124.8L423.8 122.5L423.0 120.6L421.0 118.7L419.9 117.6L417.6 117.9L415.2 117.9L412.2 117.9L409.0 117.8L405.8 117.2L403.9 115.1L401.1 115.7L397.1 113.9L394.8 111.2L391.6 110.4L390.9 111.2L392.6 112.8L393.2 115.1L395.3 118.6L396.5 116.8L396.7 119.5L400.3 119.5L403.4 116.7L404.2 119.0L407.8 120.6L409.4 122.3L407.3 125.3L405.0 127.8L401.9 130.3L399.9 132.0L397.5 132.7L394.8 134.6L391.6 135.5L388.8 136.1L386.1 137.4L383.5 137.6L382.7 135.4L382.5 133.2L380.7 130.0L378.9 128.2L377.5 126.1L376.7 123.7L375.6 120.8L373.6 118.2L372.5 115.6L370.5 113.5L370.3 111.2L369.4 113.9L366.7 110.6L367.2 112.9L368.1 115.1L369.9 117.3L371.2 119.8L372.9 122.0L373.9 124.5L375.2 126.8L375.9 129.2L377.5 133.2L380.7 135.8L383.5 139.0L385.4 141.2L389.3 139.9L391.5 139.5L393.6 138.8L395.9 139.0L395.6 141.2L394.5 144.3L393.2 147.3L391.9 149.2L390.1 150.7L387.8 151.7L386.0 153.2L384.6 155.1L382.6 157.6L380.7 160.2L378.3 162.7L377.0 166.1L377.6 168.5L377.5 170.8L379.1 174.0L378.6 177.2L379.4 180.3L378.3 182.2L376.7 183.9L374.9 185.6L372.8 187.0L370.5 189.7L371.2 192.8L371.2 195.2L369.5 197.2L367.0 198.0L366.5 202.2L364.2 204.6L362.7 206.3L361.1 207.8L359.5 209.3L355.5 210.9L353.2 210.9L350.8 210.9L346.9 212.1L344.4 211.2L344.1 207.7L342.4 205.3L341.4 202.4L339.4 199.1L338.8 196.0L338.3 192.8L335.9 189.7L334.3 187.4L334.0 184.7L334.1 182.4L334.8 180.3L336.7 176.3L335.9 174.0L336.2 171.6L335.4 169.4L334.8 167.1L334.3 165.3L332.1 163.8L330.7 161.4L329.3 158.8L329.2 156.4L330.4 154.4L330.9 151.5L328.8 150.4L324.9 150.7L322.6 147.6L318.6 147.6L316.0 148.9L313.1 149.7L309.2 149.3L306.6 150.3L303.7 150.6L301.7 149.2L299.6 147.9L297.4 146.7L294.8 144.2L293.6 142.1L292.0 140.5L289.3 138.0L288.0 134.4L289.6 132.1L290.1 129.5L290.1 126.9L288.8 124.5L290.3 122.3L291.2 119.8L293.5 116.2L295.1 114.0L297.9 113.1L300.1 111.2L300.1 108.8L300.4 106.5L302.5 105.1L304.8 104.1L306.2 101.3L307.0 101.1L309.5 102.4L312.4 102.4L314.5 100.8L317.1 100.2L321.0 99.7L323.6 100.0L326.2 99.8L328.8 99.6L331.7 99.1L332.8 99.7L332.0 101.8L331.5 103.8L333.6 105.4L336.4 105.4L339.0 106.6L340.3 108.5L342.7 109.7L345.3 109.9L346.9 108.8L346.9 106.9L350.8 105.8L352.5 107.4L354.8 107.9L357.9 108.6L361.0 109.0L363.4 109.2L365.7 108.7L369.2 108.4L370.5 105.7L371.6 103.6L371.9 101.3L372.3 100.0L369.7 99.7L366.5 100.8L363.4 100.4L359.5 100.0L358.2 97.8L356.8 95.5L357.1 93.9L360.2 93.1L361.0 93.0L365.0 92.8L368.9 91.6L372.1 91.9L375.2 93.1L377.9 92.8L380.7 92.3L381.0 90.5L377.5 88.4L374.4 87.2L375.9 84.5L373.6 85.4L371.2 86.4L372.0 86.4L368.1 87.6L366.5 86.1L363.9 84.5L362.0 86.5L360.4 88.4L359.3 90.5L359.5 92.2L356.3 93.4L352.9 93.9L351.0 93.9L351.6 96.3L353.2 97.8L351.1 100.2L348.8 98.3L348.8 97.1L347.2 95.5L346.0 93.1L346.1 91.6L344.5 90.8L340.6 89.2L338.3 86.5L336.9 85.8L334.8 86.4L335.1 88.1L337.5 90.8L340.6 92.3L342.4 93.9L344.5 94.5L342.2 96.3L341.4 97.5L340.1 97.8L340.6 95.5L339.0 94.2L336.7 92.7L334.7 91.9L332.0 90.0L330.4 88.1L327.3 88.7L324.9 89.8L322.6 89.4L320.4 89.8L320.5 91.6L316.8 93.1L315.0 95.5L315.8 96.7L314.2 98.5L312.4 99.9L308.4 99.9Z" fill="#c8e3c8"/>
<g clip-path="url(#ceu)" stroke="#e7a012" stroke-width="1.05" stroke-linejoin="round">
<path d="M364.2 24.0L598.9 24.0L598.9 63.3L551.0 94.7L520.7 91.1L521.6 89.5L521.5 86.8L524.3 86.8L527.1 81.7L523.5 82.6L520.4 81.4L515.7 79.3L513.6 74.6L509.4 73.5L505.2 73.8L503.6 78.2L498.7 79.3L498.7 79.3L498.7 79.3L494.5 78.5L485.8 80.1L482.7 78.5L477.2 78.5L470.5 78.5L469.4 75.9L460.7 77.7L457.9 78.2L453.7 80.3L453.7 80.3L452.6 80.4L452.6 80.4L449.7 79.8L446.6 77.4L445.0 77.7L441.9 77.4L438.0 75.1L435.6 72.4L430.7 73.3L427.0 72.6L423.8 70.5L418.3 71.8L412.8 72.7L411.3 74.3L409.7 76.0L411.9 77.7L407.3 77.3L402.8 77.9L395.6 76.6L392.0 78.2L389.3 78.7L388.5 81.4L388.5 81.4L389.3 86.8L390.5 91.6L390.5 92.8L388.5 91.7L383.8 90.3L378.3 89.4L375.2 87.6L375.2 87.6L375.2 83.7L377.8 82.5L378.5 79.6L375.2 78.2L371.2 75.4L368.6 75.4L365.4 75.7L365.0 73.5L366.5 72.7L363.9 70.2L359.8 69.4L359.0 67.2L358.7 65.2L359.5 64.1L362.6 61.7L361.8 59.4L365.0 58.7L361.8 53.1L362.6 51.2L360.6 49.5L363.4 47.6L364.2 44.5Z" fill="#5cac5b"/>
<path d="M388.5 81.4L388.5 81.4L389.3 78.7L392.0 78.2L395.6 76.6L402.8 77.9L407.3 77.3L411.9 77.7L409.7 76.0L411.3 74.3L412.8 72.7L418.3 71.8L423.8 70.5L427.0 72.6L430.7 73.3L435.6 72.4L438.0 75.1L441.9 77.4L445.0 77.7L446.6 77.4L449.7 79.8L452.6 80.4L452.6 80.4L449.7 83.7L445.8 83.4L444.7 86.1L441.4 86.8L441.4 91.2L437.6 90.0L432.5 89.7L427.0 91.1L423.0 93.6L419.9 91.7L419.1 90.0L416.5 89.2L412.8 89.2L407.5 85.9L403.4 86.8L403.4 92.7L398.7 91.6L394.0 87.6L389.0 87.6Z" fill="#c8e3c8"/>
<path d="M403.4 86.8L407.5 85.9L412.8 89.2L416.5 89.2L419.1 90.0L419.9 91.7L423.0 93.6L427.0 91.1L430.1 93.4L427.0 94.4L425.4 93.1L423.0 95.5L421.5 98.9L419.9 98.8L416.8 96.3L412.8 93.9L411.3 92.7L407.3 90.6L403.4 92.7Z" fill="#c8e3c8"/>
<path d="M398.7 91.6L403.4 92.7L407.3 90.6L411.3 92.7L412.8 93.9L416.8 96.3L419.9 98.8L416.8 99.1L413.6 102.1L411.3 100.2L408.9 98.6L405.5 97.5L400.3 98.8L398.7 96.3L397.1 91.6Z" fill="#f4f6f3"/>
<path d="M427.0 91.1L432.5 89.7L437.6 90.0L441.4 91.2L435.6 94.1L432.9 93.9L430.9 95.5L426.2 95.3L427.0 94.4L430.1 93.4Z" fill="#c8e3c8"/>
<path d="M423.0 95.5L426.2 95.3L430.9 95.5L433.2 97.1L433.1 99.1L427.8 99.4L425.4 97.2L421.9 99.1L421.5 98.9Z" fill="#c8e3c8"/>
<path d="M453.7 80.3L458.4 82.5L458.1 85.3L462.3 86.8L465.1 87.9L466.8 90.5L472.5 90.6L480.4 92.2L487.4 90.8L491.0 88.9L494.5 86.4L500.0 84.5L503.4 83.2L500.8 82.5L496.8 82.1L498.7 79.3L498.7 79.3L494.5 78.5L485.8 80.1L482.7 78.5L477.2 78.5L470.5 78.5L469.4 75.9L460.7 77.7L457.9 78.2L453.7 80.3Z" fill="#c8e3c8"/>
<path d="M430.9 95.5L433.2 99.4L437.6 101.8L440.3 106.0L439.2 108.0L441.9 110.1L443.5 109.8L449.0 112.6L453.8 113.5L455.5 113.2L459.9 113.9L466.2 111.5L468.1 114.3L470.1 114.3L469.8 117.5L468.7 119.8L472.5 123.7L474.4 123.7L475.3 122.2L476.4 122.2L481.9 121.7L485.1 123.6L491.3 127.7L511.8 118.2L511.8 96.3L510.7 94.9L514.1 92.3L516.8 91.6L520.4 90.8L520.7 91.1L520.7 91.1L521.6 89.5L521.5 86.8L524.3 86.8L527.1 81.7L523.5 82.6L520.4 81.4L515.7 79.3L513.6 74.6L509.4 73.5L505.2 73.8L503.6 78.2L498.7 79.3L498.7 79.3L496.8 82.1L500.8 82.5L503.4 83.2L500.0 84.5L494.5 86.4L491.0 88.9L487.4 90.8L480.4 92.2L472.5 90.6L466.8 90.5L465.1 87.9L462.3 86.8L458.1 85.3L458.4 82.5L453.7 80.3L453.7 80.3L452.6 80.4L452.6 80.4L449.7 83.7L445.8 83.4L444.7 86.1L441.4 86.8L441.4 91.2L435.6 94.1L432.9 93.9Z" fill="#1b551b"/>
<path d="M520.7 91.1L520.4 90.8L516.8 91.6L514.1 92.3L510.7 94.9L510.7 94.9L511.8 97.8L514.4 98.2L518.0 96.9L516.5 94.7L519.1 93.3Z" fill="#f4f6f3"/>
<path d="M514.4 98.2L518.0 96.9L519.6 98.6L518.8 103.3L513.3 104.1L513.3 99.4Z" fill="#5cac5b"/>
<path d="M411.3 100.2L413.6 102.1L416.8 99.1L419.9 98.8L421.9 99.1L425.4 97.2L427.8 99.4L433.1 99.1L427.8 101.0L427.3 103.3L425.4 104.4L424.6 108.0L419.9 110.6L412.8 111.2L411.1 110.6L411.1 108.0L410.6 104.9Z" fill="#f4f6f3"/>
<path d="M412.2 117.9L414.1 114.8L414.7 113.5L411.1 110.6L412.8 111.2L419.9 110.6L424.6 108.0L425.4 104.4L427.3 103.3L427.8 101.0L433.1 99.1L433.2 99.4L437.6 101.8L434.0 103.0L431.7 105.7L433.2 106.5L432.5 109.6L430.7 111.2L427.0 113.9L425.4 115.9L427.0 119.0L423.5 119.5L421.0 118.7L409.7 119.8Z" fill="#5cac5b"/>
<path d="M423.5 119.5L427.0 119.0L425.4 115.9L427.0 113.9L430.7 111.2L432.5 109.6L433.2 106.5L431.7 105.7L434.0 103.0L437.6 101.8L440.3 106.0L439.2 108.0L441.9 110.1L441.3 112.3L445.8 114.3L449.7 115.0L454.0 115.6L453.8 113.5L455.2 114.6L459.9 115.4L459.9 113.9L466.2 111.5L468.1 114.3L464.6 116.7L463.4 120.1L462.0 121.1L460.7 123.7L458.4 126.1L444.2 152.8L428.5 152.8L409.7 133.9Z" fill="#5cac5b"/>
<path d="M441.3 112.3L443.5 109.8L449.0 112.6L453.8 113.5L454.0 115.6L449.7 115.0L445.8 114.3Z" fill="#c8e3c8"/>
<path d="M455.2 114.6L455.5 113.2L459.9 113.9L459.9 115.4Z" fill="#c8e3c8"/>
<path d="M453.7 119.0L454.4 116.1L456.5 116.7L459.2 117.9L460.4 119.0L460.7 123.7L459.8 123.0L455.2 124.5Z" fill="#5cac5b"/>
<path d="M460.3 124.5L462.0 121.1L463.4 120.1L464.6 116.7L468.1 114.3L470.1 114.3L469.8 117.5L468.7 119.8L472.5 123.7L474.4 123.7L472.7 125.5L469.4 127.7L468.6 131.6L470.8 133.9L471.2 137.1L470.3 141.8L456.8 141.8L456.8 124.5Z" fill="#f4f6f3"/>
<path d="M470.3 141.8L471.2 137.1L470.8 133.9L468.6 131.6L469.4 127.7L472.7 125.5L474.1 126.9L474.4 129.9L476.4 129.4L479.9 130.0L481.1 133.9L477.2 135.0L476.3 138.2L473.3 138.7L474.1 147.3L467.8 148.1L467.8 141.8Z" fill="#9cd09a"/>
<path d="M472.7 125.5L474.4 123.7L475.3 122.2L476.4 122.2L477.2 125.3L479.6 126.9L480.0 128.8L482.7 131.6L484.3 133.9L481.9 135.7L481.1 133.9L479.9 130.0L476.4 129.4L474.4 129.9L474.1 126.9Z" fill="#c8e3c8"/>
<path d="M476.3 138.2L477.2 135.0L481.1 133.9L481.9 135.7L484.3 137.9L482.2 140.5L480.0 141.5L477.5 141.0Z" fill="#e0f0df"/>
<path d="M476.4 122.2L481.9 121.7L485.1 123.6L491.3 126.1L491.3 144.9L480.0 144.2L480.0 141.5L482.2 140.5L484.3 137.9L481.9 135.7L484.3 133.9L482.7 131.6L480.0 128.8L479.6 126.9L477.2 125.3Z" fill="#9cd09a"/>
<path d="M474.1 147.3L475.6 148.1L480.4 149.7L480.4 155.9L477.2 155.9L470.9 149.7L472.5 147.3Z" fill="#5cac5b"/>
<path d="M356.3 93.9L357.3 92.0L359.5 91.6L368.9 90.0L380.7 92.3L383.8 93.0L385.8 95.2L384.9 99.1L381.9 99.3L379.1 99.4L375.2 99.7L373.0 99.7L372.3 101.0L365.7 102.6L356.3 102.6Z" fill="#5cac5b"/>
<path d="M380.7 92.3L383.8 90.3L388.5 91.7L387.7 93.1L383.8 93.0Z" fill="#c8e3c8"/>
<path d="M383.8 93.0L387.7 93.1L388.5 95.5L385.8 95.2Z" fill="#e0f0df"/>
<path d="M387.7 93.1L388.5 91.7L390.5 92.8L393.2 93.9L391.6 97.1L388.5 95.5Z" fill="#c8e3c8"/>
<path d="M372.3 101.0L373.0 99.7L375.2 99.7L379.1 99.4L381.9 99.3L380.3 101.6L379.9 103.5L376.4 105.1L372.0 106.8L371.7 105.2L372.6 103.2L371.2 102.6Z" fill="#c8e3c8"/>
<path d="M370.6 105.5L371.7 105.2L372.6 103.2L371.9 103.0Z" fill="#c8e3c8"/>
<path d="M369.2 108.4L370.6 105.5L371.7 105.2L371.2 108.0L370.5 111.2L370.3 111.2Z" fill="#9cd09a"/>
<path d="M370.5 111.2L371.2 108.0L371.7 105.2L372.0 106.8L376.4 105.1L377.2 106.9L373.6 108.0L375.2 109.6L372.8 111.7Z" fill="#c8e3c8"/>
<path d="M381.9 99.3L384.9 99.1L386.9 101.3L387.7 104.9L390.5 107.3L391.6 110.4L390.4 111.2L388.5 111.8L385.7 111.7L381.4 108.5L377.2 106.9L376.4 105.1L379.9 103.5L380.3 101.6Z" fill="#9cd09a"/>
<path d="M372.8 111.7L375.2 109.6L373.6 108.0L377.2 106.9L381.4 108.5L385.7 111.7L388.5 111.8L390.4 111.2L391.6 113.5L397.1 115.1L395.6 119.0L397.1 121.4L402.8 123.0L401.9 126.1L397.1 127.7L392.4 128.3L388.8 130.3L383.8 130.3L383.0 131.6L375.2 126.1L368.9 113.5Z" fill="#5cac5b"/>
<path d="M383.0 131.6L383.8 130.3L388.8 130.3L392.4 128.3L397.1 127.7L398.4 130.3L398.9 131.3L394.0 137.1L383.0 138.7Z" fill="#c8e3c8"/>
<path d="M398.4 130.3L398.9 131.3L401.9 126.1L402.8 123.0L403.9 119.8L404.0 116.1L409.7 122.2L406.6 132.4Z" fill="#c8e3c8"/>
<path d="M395.6 119.0L397.1 121.4L402.8 123.0L403.9 119.8L404.0 116.1L400.3 118.2Z" fill="#9cd09a"/>
<path d="M384.6 95.6L385.8 95.2L388.5 95.5L391.6 97.1L392.4 98.6L395.6 99.7L400.3 99.7L400.3 98.8L405.5 97.5L408.9 98.6L411.3 100.2L410.6 104.9L411.1 108.0L411.1 110.6L414.7 113.5L414.1 114.8L412.2 117.9L401.9 119.8L391.6 110.4L390.5 107.3L387.7 104.9L386.9 101.3L384.9 99.1Z" fill="#5cac5b"/>
<path d="M321.8 66.4L327.3 66.8L333.6 64.9L335.1 62.5L334.8 60.5L334.7 57.8L337.5 56.2L338.3 53.9L340.3 51.5L341.4 50.3L343.8 50.0L347.7 49.2L348.5 48.9L350.8 49.6L354.0 49.3L356.3 48.1L360.6 49.5L362.6 48.4L364.2 46.8L364.2 44.5L321.8 44.5Z" fill="#5cac5b"/>
<path d="M333.6 64.9L335.1 62.5L334.8 60.5L334.7 57.8L337.5 56.2L338.3 53.9L341.4 50.3L343.8 50.0L347.7 49.2L350.8 50.7L352.7 52.3L353.5 54.2L346.9 68.0L331.2 71.1L332.8 66.4Z" fill="#5cac5b"/>
<path d="M353.5 54.2L352.7 52.3L350.8 50.7L347.7 49.2L348.5 48.9L350.8 49.6L354.0 49.3L356.3 48.1L360.6 49.5L362.6 51.2L361.8 53.1L365.0 58.7L359.1 62.5L354.8 63.5L349.3 63.3L348.2 58.6L353.5 54.5Z" fill="#5cac5b"/>
<path d="M328.1 71.5L332.0 71.5L335.9 71.1L335.6 68.8L332.5 66.4L328.1 67.2Z" fill="#5cac5b"/>
<path d="M349.3 63.6L359.8 64.1L358.7 65.2L359.0 67.2L355.5 66.6L350.0 67.1L349.3 65.7Z" fill="#c8e3c8"/>
<path d="M347.7 69.4L348.5 66.8L355.5 66.6L359.0 67.2L359.8 69.4L357.3 70.1L353.2 69.1Z" fill="#c8e3c8"/>
<path d="M347.7 69.4L353.2 69.1L357.3 70.1L357.6 71.1L355.5 72.4L352.4 72.7L351.3 72.1L348.5 70.7Z" fill="#9cd09a"/>
<path d="M352.4 72.7L355.5 72.4L357.6 71.1L359.8 69.4L363.9 70.2L366.5 72.7L365.0 73.5L365.4 75.7L363.4 77.0L357.9 76.3L352.6 76.6L352.4 74.8Z" fill="#c8e3c8"/>
<path d="M337.8 72.9L338.3 71.9L346.3 71.9L351.3 72.1L352.4 72.7L352.4 74.8L352.6 76.6L353.2 78.2L351.0 80.4L345.3 79.8L343.0 78.5L339.0 77.4L338.4 75.1Z" fill="#5cac5b"/>
<path d="M350.4 81.5L351.0 80.4L353.2 78.2L352.6 76.6L357.9 76.3L363.4 77.0L365.4 75.7L368.6 75.4L371.2 75.4L375.2 78.2L378.5 79.6L377.8 82.5L375.9 83.7L370.5 88.4L362.6 86.8L362.1 86.5L359.8 86.1L362.6 84.5L361.0 82.1L358.7 81.4L357.3 81.7L354.0 82.3L351.5 82.1Z" fill="#9cd09a"/>
<path d="M357.3 81.7L358.7 81.4L361.0 82.1L362.6 84.5L359.8 86.1Z" fill="#c8e3c8"/>
<path d="M347.2 85.1L349.3 85.0L351.5 82.1L354.0 82.3L357.3 81.7L359.8 86.1L362.1 86.5L360.4 88.7L358.7 88.4L355.5 89.0L350.8 87.9L349.3 86.5Z" fill="#9cd09a"/>
<path d="M350.8 87.9L355.5 89.0L358.7 88.4L360.4 88.7L361.0 91.6L359.5 91.7L356.8 92.0L354.0 92.3L351.5 92.7L350.7 91.1L351.6 90.0Z" fill="#c8e3c8"/>
<path d="M347.2 95.3L348.5 93.4L351.5 92.7L354.0 92.3L356.8 92.0L356.3 93.8L356.3 101.0L346.9 101.0Z" fill="#9cd09a"/>
<path d="M322.6 73.0L329.0 71.1L329.0 71.3L331.2 71.5L332.8 71.9L337.8 72.9L338.4 75.1L339.0 77.4L334.7 78.5L337.2 80.9L335.9 82.9L331.2 83.1L327.4 82.8L328.4 80.6L325.5 79.8L325.1 77.7L324.9 76.2L326.6 73.8Z" fill="#266a26"/>
<path d="M320.8 76.8L324.6 77.4L324.9 76.2L326.6 73.8L323.4 72.7L320.2 75.9Z" fill="#3a8836"/>
<path d="M319.4 77.3L320.8 76.8L324.6 77.4L325.1 77.7L325.5 79.8L324.6 79.8L322.1 79.2L319.4 77.9Z" fill="#3a8836"/>
<path d="M306.1 80.6L318.0 77.4L319.4 77.3L319.4 77.9L322.1 79.2L324.6 79.8L325.5 79.8L328.4 80.6L327.4 82.8L324.9 84.8L326.5 85.4L325.9 88.1L327.3 88.7L326.5 91.6L320.5 90.9L316.6 90.3L312.7 89.4L306.1 88.4Z" fill="#3a8836"/>
<path d="M324.9 84.8L327.4 82.8L330.4 82.8L332.0 84.0L329.6 85.3L326.5 85.4Z" fill="#3a8836"/>
<path d="M330.4 82.8L331.2 83.1L335.9 82.9L337.2 80.9L339.0 80.6L342.2 80.9L342.5 82.5L340.9 84.0L337.0 84.5L334.7 83.7L332.0 84.0Z" fill="#5cac5b"/>
<path d="M334.7 78.5L339.0 77.4L343.0 78.5L345.0 79.8L342.2 80.9L339.0 80.6L337.2 80.9Z" fill="#9cd09a"/>
<path d="M342.2 80.9L345.0 79.8L351.0 80.4L350.4 81.5L346.9 82.1L345.0 82.5L342.5 82.5Z" fill="#c8e3c8"/>
<path d="M340.9 84.0L342.5 82.5L345.0 82.5L346.9 82.1L350.4 81.5L351.5 82.1L349.3 85.0L347.2 85.1L345.0 85.4L343.0 85.4L341.4 84.5Z" fill="#9cd09a"/>
<path d="M337.0 84.5L341.4 84.5L339.8 86.1L336.9 86.1Z" fill="#9cd09a"/>
<path d="M336.9 86.1L339.8 86.1L341.4 84.5L343.0 85.4L345.0 85.4L345.3 86.8L340.6 86.5L340.1 88.1L344.5 90.8L335.9 86.8Z" fill="#c8e3c8"/>
<path d="M340.6 86.5L345.3 86.8L346.1 88.4L344.5 90.0L340.1 88.1Z" fill="#e0f0df"/>
<path d="M345.0 85.4L347.2 85.1L349.3 86.5L350.8 87.9L351.6 90.0L350.7 91.1L348.5 91.2L346.6 90.3L346.1 88.4L345.3 86.8Z" fill="#c8e3c8"/>
<path d="M344.5 90.8L344.5 90.0L346.1 88.4L346.6 90.3L347.2 90.8L346.0 91.7Z" fill="#e0f0df"/>
<path d="M346.0 91.7L347.8 91.6L348.5 93.4L347.2 95.3L345.3 94.7Z" fill="#e0f0df"/>
<path d="M347.8 91.9L348.5 91.2L350.7 91.1L351.5 92.7L348.5 93.4Z" fill="#c8e3c8"/>
<path d="M326.5 85.4L329.6 85.3L332.0 84.0L334.7 83.7L337.0 84.5L336.9 85.8L337.5 88.4L345.3 94.7L340.6 99.4L326.5 90.0L327.3 88.7L325.9 88.1Z" fill="#3a8836"/>
<path d="M300.6 88.4L312.7 89.4L316.6 90.3L320.5 90.9L321.8 94.7L312.4 101.0L303.9 99.1L303.7 97.1L304.5 95.5L304.7 93.1L305.8 92.2L302.6 91.6L301.7 91.7L300.6 90.8Z" fill="#3a8836"/>
<path d="M301.7 91.7L302.6 91.6L305.8 92.2L304.7 93.1L304.5 95.5L303.7 97.1L303.9 99.1L299.8 100.2L299.8 91.6Z" fill="#5cac5b"/>
<path d="M284.1 101.0L312.7 101.0L312.7 102.4L312.8 107.1L309.7 107.9L307.2 110.4L301.8 112.4L301.8 114.0L284.1 114.0Z" fill="#c8e3c8"/>
<path d="M284.1 114.0L301.8 114.0L301.8 116.7L296.7 116.7L296.7 120.6L295.1 124.1L284.1 124.1Z" fill="#e0f0df"/>
<path d="M284.1 124.1L295.1 124.1L296.7 120.6L296.7 116.7L301.8 116.7L301.8 114.6L308.0 118.2L306.9 131.8L297.4 133.2L296.3 134.4L289.6 131.9L284.1 131.9Z" fill="#f4f6f3"/>
<path d="M312.7 100.2L329.0 99.4L328.5 101.0L328.4 103.2L327.3 105.1L330.4 110.1L330.9 114.3L331.0 115.9L334.2 120.6L327.3 124.8L322.1 127.4L320.7 127.7L308.0 118.2L301.8 114.6L301.8 112.4L307.2 110.4L309.7 107.9L312.8 107.1L312.7 102.4Z" fill="#9cd09a"/>
<path d="M329.0 99.4L333.6 98.6L333.6 105.4L333.1 107.3L331.5 109.9L330.4 110.1L327.3 105.1L328.4 103.2L328.5 101.0Z" fill="#c8e3c8"/>
<path d="M333.6 105.4L354.9 106.5L354.8 123.0L353.2 126.1L353.2 126.9L340.5 120.8L337.8 122.0L334.2 120.6L331.0 115.9L330.9 114.3L330.4 110.1L331.5 109.9L333.1 107.3Z" fill="#c8e3c8"/>
<path d="M354.9 106.5L369.2 106.5L369.2 108.4L370.3 111.2L373.6 116.7L373.6 123.0L354.8 123.0Z" fill="#5cac5b"/>
<path d="M306.9 131.8L297.4 133.2L296.3 134.4L297.6 138.0L298.7 138.8L302.5 141.0L303.1 141.5L306.9 141.2L308.4 138.7L312.0 135.2L315.8 134.1L317.5 133.5L321.0 133.3L322.1 131.8L322.1 127.4L320.7 127.7L308.0 118.2Z" fill="#e0f0df"/>
<path d="M322.1 127.4L327.3 124.8L334.2 120.6L337.8 122.0L340.5 120.8L339.8 124.8L340.1 126.3L336.7 134.7L335.3 136.6L331.2 136.6L327.7 136.6L321.9 136.3L321.2 139.1L319.3 138.8L318.8 137.6L315.8 134.1L317.5 133.5L321.0 133.3L322.1 131.8Z" fill="#f4f6f3"/>
<path d="M340.5 120.8L353.2 126.9L353.2 132.9L350.8 135.5L350.0 137.6L351.3 139.8L349.6 141.0L344.7 144.2L339.8 145.7L337.3 142.6L339.2 141.8L338.3 138.7L336.9 136.1L336.7 134.7L340.1 126.3L339.8 124.8Z" fill="#f4f6f3"/>
<path d="M353.2 126.9L353.2 126.1L354.8 123.0L373.6 123.0L375.9 129.2L372.8 135.0L372.6 137.1L368.9 142.6L367.3 141.8L357.9 142.6L352.4 143.4L351.3 139.8L350.0 137.6L350.8 135.5L353.2 132.9Z" fill="#c8e3c8"/>
<path d="M352.4 143.4L357.9 142.6L367.3 141.8L368.9 142.6L370.5 149.7L368.9 151.2L364.2 151.8L358.7 149.7L354.8 145.7Z" fill="#e0f0df"/>
<path d="M372.6 137.1L372.8 135.0L375.9 129.2L377.5 133.2L382.2 137.1L379.9 134.7L373.6 135.0Z" fill="#c8e3c8"/>
<path d="M368.9 142.6L372.6 137.1L373.6 135.0L379.9 134.7L382.2 137.9L383.5 139.4L384.6 142.6L390.7 144.9L386.1 149.7L381.4 151.2L377.5 152.0L371.2 150.3L370.5 149.7Z" fill="#c8e3c8"/>
<path d="M383.5 139.4L396.0 137.9L397.1 141.8L393.2 147.3L386.1 155.1L380.7 160.2L379.9 153.1L381.4 151.2L386.1 149.7L390.7 144.9L384.6 142.6Z" fill="#f4f6f3"/>
<path d="M371.2 150.3L377.5 152.0L381.4 151.2L379.9 153.1L380.7 160.2L377.5 164.7L374.7 162.2L368.9 159.1L368.9 155.9L369.7 152.0L370.5 149.7Z" fill="#9cd09a"/>
<path d="M368.9 155.9L369.7 152.0L368.9 151.2L364.2 151.8L362.6 155.1L362.0 159.5L368.9 159.1Z" fill="#c8e3c8"/>
<path d="M368.9 159.1L374.7 162.2L377.5 164.7L379.1 174.0L375.2 175.2L370.5 175.6L369.7 172.7L366.5 171.9L363.4 170.5L361.8 166.9L363.9 162.8L362.0 159.5Z" fill="#c8e3c8"/>
<path d="M334.3 165.3L335.1 166.9L336.7 166.9L341.4 166.8L343.0 170.1L346.1 169.3L349.7 169.0L350.0 174.8L353.2 174.8L354.0 175.6L358.2 175.7L360.2 174.8L362.0 176.7L360.2 170.8L363.4 170.5L361.8 166.9L363.9 162.8L362.0 159.5L362.6 155.1L364.2 151.8L358.7 149.7L354.8 149.7L350.8 150.9L345.3 152.0L344.5 151.8L343.4 155.9L341.4 159.1L340.6 161.4L339.0 164.3L335.9 165.0Z" fill="#c8e3c8"/>
<path d="M338.3 150.4L340.6 152.0L344.5 151.8L350.8 150.9L354.8 149.7L358.7 149.7L354.8 145.7L352.4 143.4L351.3 140.2L349.6 141.0L344.7 144.2L339.8 145.7Z" fill="#e0f0df"/>
<path d="M328.8 150.4L330.9 153.9L333.2 154.0L340.6 154.4L340.6 152.0L338.3 150.4L339.8 145.7L337.3 142.6L339.2 141.8L338.3 138.7L337.8 137.1L335.0 141.0L333.1 146.5L330.9 147.3Z" fill="#c8e3c8"/>
<path d="M319.7 147.6L319.9 143.4L321.2 139.1L321.9 136.3L327.7 136.6L331.2 136.6L335.3 136.6L337.8 137.1L338.3 138.7L335.0 141.0L333.1 146.5L330.9 147.3L328.8 150.4L319.7 151.2Z" fill="#9cd09a"/>
<path d="M288.0 134.4L289.6 131.9L296.3 134.4L297.6 138.0L289.1 138.0L284.1 137.1Z" fill="#c8e3c8"/>
<path d="M292.0 140.5L294.0 137.9L297.6 138.0L298.7 138.8L302.5 141.0L303.1 141.5L302.6 144.2L300.6 144.2L299.3 142.7L297.9 141.8L294.8 142.6Z" fill="#c8e3c8"/>
<path d="M294.8 142.6L297.9 141.8L299.3 144.2L297.4 146.7L293.5 144.9Z" fill="#e0f0df"/>
<path d="M297.4 146.7L299.3 144.2L300.6 144.2L302.6 144.2L302.2 145.7L303.7 150.6Z" fill="#e0f0df"/>
<path d="M303.7 150.6L302.2 145.7L302.6 144.2L303.1 141.5L306.9 141.2L308.4 141.0L311.1 142.4L311.6 144.9L310.5 149.5Z" fill="#c8e3c8"/>
<path d="M310.5 149.5L311.6 144.9L311.1 142.4L311.1 140.2L315.5 140.2L316.3 141.8L316.4 144.9L317.4 147.9Z" fill="#c8e3c8"/>
<path d="M317.4 147.9L316.4 144.9L316.3 141.8L315.5 140.2L316.9 140.2L318.0 143.1L318.0 147.8Z" fill="#c8e3c8"/>
<path d="M318.0 147.8L318.0 143.1L316.9 140.2L319.3 138.8L321.2 139.1L319.9 143.4L319.7 147.6Z" fill="#e0f0df"/>
<path d="M306.9 141.2L308.4 138.7L312.0 135.2L315.8 134.1L318.8 137.6L319.3 138.8L316.9 140.2L315.5 140.2L311.1 140.2L311.1 142.4L308.4 141.0Z" fill="#e0f0df"/>
<path d="M329.3 158.8L330.9 153.9L333.2 154.0L336.2 154.0L335.9 155.5L338.3 158.3L337.5 161.1L334.0 162.2L332.8 163.6L330.4 162.2L323.4 157.5Z" fill="#e0f0df"/>
<path d="M332.8 163.6L334.0 162.2L337.5 161.1L338.3 158.3L335.9 155.5L336.2 154.0L340.6 154.4L340.6 152.0L344.5 151.8L343.4 155.9L341.4 159.1L340.6 161.4L339.0 164.3L335.9 165.0L334.3 165.3Z" fill="#e0f0df"/>
<path d="M334.8 167.1L336.7 166.9L341.4 166.8L343.0 170.1L346.1 169.3L349.7 169.0L350.0 174.8L353.2 174.8L353.2 177.9L350.0 177.9L350.0 183.1L352.4 185.0L348.5 185.8L344.5 184.8L336.7 184.5L334.0 184.7L323.4 173.2Z" fill="#f4f6f3"/>
<path d="M350.0 177.9L353.2 177.9L353.2 174.8L354.0 175.6L358.2 175.7L360.2 174.8L362.0 176.7L360.2 170.8L363.4 170.5L366.5 171.9L367.8 174.0L367.3 177.1L363.4 181.8L360.2 182.5L359.5 183.9L356.3 185.4L354.8 185.0L352.4 185.0L350.0 183.1Z" fill="#c8e3c8"/>
<path d="M370.5 175.6L379.1 174.0L386.1 174.8L386.1 201.5L367.0 199.6L365.7 197.5L365.0 192.8L367.3 188.9L367.0 184.2L363.4 181.8L362.9 180.7L367.3 180.3L368.9 176.3L369.8 175.6Z" fill="#c8e3c8"/>
<path d="M366.5 171.9L369.7 172.7L371.2 180.3L370.5 184.2L368.9 181.1L367.0 179.0L367.8 174.0Z" fill="#c8e3c8"/>
<path d="M354.8 185.0L356.3 185.4L359.5 183.9L360.2 182.5L363.4 181.8L367.0 184.2L367.3 188.9L365.0 192.8L361.8 192.4L359.5 191.3L356.3 187.3Z" fill="#c8e3c8"/>
<path d="M346.9 192.0L348.5 185.8L352.4 185.0L354.8 185.0L356.3 187.3L359.5 191.3L361.8 192.4L357.9 196.0L355.5 197.8L351.6 197.2L347.7 199.6L346.9 196.3Z" fill="#c8e3c8"/>
<path d="M334.0 184.7L336.7 184.5L344.5 184.8L348.5 185.8L346.9 192.0L346.9 196.3L346.9 202.1L341.4 202.4L331.2 201.5L331.2 184.2Z" fill="#c8e3c8"/>
<path d="M341.4 202.4L346.9 202.1L346.9 196.3L347.7 199.6L351.6 197.2L355.5 197.8L357.9 196.0L361.8 192.4L365.0 192.8L365.7 197.5L367.0 199.6L370.5 201.5L362.6 214.0L339.0 214.0Z" fill="#5cac5b"/>
<path d="M357.9 203.8L359.8 202.6L361.7 203.8L360.2 205.5L358.7 205.1Z" fill="#c8e3c8"/>
<path d="M389.3 86.8L391.4 85.9L393.2 84.5L396.0 84.6L398.7 84.0L398.7 86.4L396.0 87.6L397.1 89.6L398.4 91.6L400.3 93.4L398.7 95.5L400.3 98.8L397.8 98.9L395.6 99.7L392.4 98.6L393.2 94.4L390.5 91.6L390.1 89.2Z" fill="#fff"/>
</g>
<path d="M306.7 101.0L305.5 99.7L303.9 99.1L301.5 99.4L301.7 96.7L300.6 95.6L301.7 92.3L300.9 90.0L302.9 88.9L305.3 88.5L307.6 89.2L310.1 89.8L312.7 89.4L313.6 87.3L313.6 85.0L312.0 83.4L308.1 82.3L308.4 81.2L310.7 81.8L313.0 81.0L313.5 79.5L315.8 79.8L318.0 78.7L319.4 77.3L321.2 76.8L322.6 75.5L323.4 74.3L326.5 73.5L328.8 73.0L329.0 71.1L328.2 68.8L329.0 67.9L332.1 66.9L331.7 68.6L332.6 69.3L331.2 71.0L330.9 71.6L332.8 72.7L336.7 71.9L338.3 72.9L341.4 71.9L344.5 71.5L346.3 72.1L348.8 70.8L348.6 68.3L350.8 66.9L352.4 68.0L353.8 67.5L353.7 65.8L352.4 64.9L355.5 64.1L359.5 64.1L362.9 63.5L360.2 62.5L356.3 62.7L353.9 63.5L351.5 63.5L349.3 62.0L349.1 59.5L350.8 57.8L353.3 57.2L355.2 55.5L356.0 54.5L353.5 54.2L350.0 54.5L348.8 56.2L346.1 57.6L343.0 59.7L342.5 61.7L345.0 63.3L343.8 64.4L341.4 66.8L340.6 69.3L338.0 70.4L335.8 70.4L335.1 68.8L333.6 66.0L332.8 64.9L332.0 64.1L330.4 64.9L328.1 66.3L324.3 65.2L323.4 62.5L323.4 60.2L325.7 59.2L329.6 57.8L332.5 56.1L335.1 53.9L337.5 51.5L339.8 50.0L342.2 48.9L345.3 47.6L347.7 47.0L350.0 46.6L352.4 46.2L356.0 45.9L359.5 46.0L363.4 47.4L367.3 48.4L369.6 49.4L372.0 49.0L374.2 50.1L376.9 49.9L379.1 51.1L380.2 52.8L376.7 53.7L372.8 53.4L370.1 55.1L372.8 56.2L374.4 57.2L378.3 56.1L378.3 54.7L381.4 54.2L384.6 53.9L384.3 50.0L387.7 50.7L391.6 51.2L394.0 50.8L396.3 50.2L398.7 50.0L401.9 50.3L404.5 49.4L407.3 49.3L410.5 47.8L413.3 48.0L416.0 48.7L418.3 49.6L420.7 50.0L423.5 50.4L423.0 46.8L420.4 46.0L423.5 43.0L425.4 42.3L427.9 42.6L429.8 44.1L428.2 45.6L429.8 47.1L430.9 50.7L433.6 49.5L436.4 50.4L436.9 47.6L437.2 44.8L439.5 44.1L441.9 43.7L441.9 41.9L444.4 41.1L447.0 41.4L449.5 41.7L452.1 41.3L451.3 39.9L453.7 39.5L456.0 39.0L458.8 38.0L461.8 39.0L464.6 38.0L467.3 38.5L469.9 38.8L472.5 38.2L474.6 37.2L476.9 37.0L479.3 36.9L481.9 37.2L485.2 37.1L488.2 38.2L490.9 39.0L493.7 39.0L492.6 41.8L494.8 41.5L497.1 41.4L499.3 41.9L501.5 42.1L504.4 42.9L507.3 43.1L510.2 42.9L513.3 42.3L515.6 42.8L517.7 44.0L521.2 46.0L523.5 45.2L526.0 46.0L528.2 45.1L530.6 44.7L533.0 44.4L535.3 43.7L537.9 43.2L540.6 43.3L543.1 44.0L545.7 44.6L548.4 44.6L551.0 45.1L554.9 46.2L557.7 45.7L560.4 47.0L563.2 46.6L565.9 46.5L567.5 48.2L570.2 48.6L573.0 47.6L575.7 48.6L578.5 48.1L580.7 47.2L583.2 47.4L586.0 48.1L588.9 47.7L591.8 47.9L595.0 48.4L598.1 49.3L598.0 52.4L598.1 55.5L594.2 56.1L595.7 58.6L597.0 59.7L594.7 59.3L592.5 60.5L590.2 60.9L587.9 60.6L585.4 61.9L582.9 63.3L580.6 63.5L578.3 63.5L576.1 62.8L574.2 63.6L571.4 64.1L569.8 66.4L571.7 69.3L569.8 71.5L566.7 74.0L564.3 75.1L561.5 77.4L560.4 74.3L560.1 70.4L559.6 67.2L562.0 66.4L563.5 64.3L565.2 62.3L567.5 60.9L566.7 60.5L563.6 61.1L560.4 60.9L559.0 62.7L557.3 64.1L555.0 64.7L552.6 64.7L549.7 64.2L546.8 64.7L543.9 64.2L541.6 64.4L539.2 64.6L536.1 66.8L534.5 68.6L532.6 69.9L530.6 71.1L527.8 71.6L531.4 73.0L533.9 73.0L536.1 74.3L537.2 75.5L536.1 79.0L535.9 81.4L532.9 83.7L531.4 85.8L529.8 87.9L527.5 89.2L525.1 89.1L522.7 89.7L520.7 91.1L519.1 93.3L516.5 94.7L517.5 96.7L518.7 98.6L518.5 101.8L516.4 103.0L514.1 103.3L513.8 99.7L514.4 98.2L511.8 97.8L512.1 95.5L510.5 94.7L507.0 93.9L505.8 96.6L506.3 93.4L503.1 94.9L500.3 97.1L502.3 99.1L505.0 98.5L507.8 99.4L504.7 101.0L502.6 103.2L505.2 106.8L506.7 109.1L507.0 111.2L505.9 113.3L504.1 115.1L503.4 117.5L501.6 119.5L499.2 120.6L496.8 121.1L494.8 122.5L492.3 123.2L489.8 123.7L488.7 125.3L487.7 123.7L485.1 123.6L483.2 125.3L481.6 127.7L482.7 130.0L484.5 131.7L486.3 133.5L486.2 136.1L487.1 138.7L484.3 141.0L482.5 142.6L480.5 144.0L480.0 141.5L477.7 140.4L476.1 138.3L473.9 136.5L472.5 137.1L471.9 139.4L471.2 141.8L473.0 144.2L474.9 146.8L476.0 147.8L477.8 150.0L478.0 153.6L479.1 155.3L478.0 155.5L474.5 152.9L473.0 148.9L472.8 147.0L470.1 144.6L470.5 141.0L470.2 138.4L470.2 135.7L469.0 133.2L467.0 131.4L464.6 132.7L463.4 131.6L463.4 129.2L463.9 126.9L460.7 124.5L459.6 122.2L457.6 123.0L455.2 123.4L451.9 124.5L451.3 126.1L448.6 127.4L446.3 129.1L444.6 131.4L441.6 133.2L441.1 137.1L440.8 141.3L438.3 143.5L437.2 144.8L435.6 142.6L434.0 139.1L433.5 136.8L432.5 134.7L431.5 132.3L430.1 130.0L429.8 126.9L429.5 124.1L426.2 124.8L423.8 122.5L423.0 120.6L421.0 118.7L419.9 117.6L417.6 117.9L415.2 117.9L412.2 117.9L409.0 117.8L405.8 117.2L403.9 115.1L401.1 115.7L397.1 113.9L394.8 111.2L391.6 110.4L390.9 111.2L392.6 112.8L393.2 115.1L395.3 118.6L396.5 116.8L396.7 119.5L400.3 119.5L403.4 116.7L404.2 119.0L407.8 120.6L409.4 122.3L407.3 125.3L405.0 127.8L401.9 130.3L399.9 132.0L397.5 132.7L394.8 134.6L391.6 135.5L388.8 136.1L386.1 137.4L383.5 137.6L382.7 135.4L382.5 133.2L380.7 130.0L378.9 128.2L377.5 126.1L376.7 123.7L375.6 120.8L373.6 118.2L372.5 115.6L370.5 113.5L370.3 111.2L369.4 113.9L366.7 110.6L367.2 112.9L368.1 115.1L369.9 117.3L371.2 119.8L372.9 122.0L373.9 124.5L375.2 126.8L375.9 129.2L377.5 133.2L380.7 135.8L383.5 139.0L385.4 141.2L389.3 139.9L391.5 139.5L393.6 138.8L395.9 139.0L395.6 141.2L394.5 144.3L393.2 147.3L391.9 149.2L390.1 150.7L387.8 151.7L386.0 153.2L384.6 155.1L382.6 157.6L380.7 160.2L378.3 162.7L377.0 166.1L377.6 168.5L377.5 170.8L379.1 174.0L378.6 177.2L379.4 180.3L378.3 182.2L376.7 183.9L374.9 185.6L372.8 187.0L370.5 189.7L371.2 192.8L371.2 195.2L369.5 197.2L367.0 198.0L366.5 202.2L364.2 204.6L362.7 206.3L361.1 207.8L359.5 209.3L355.5 210.9L353.2 210.9L350.8 210.9L346.9 212.1L344.4 211.2L344.1 207.7L342.4 205.3L341.4 202.4L339.4 199.1L338.8 196.0L338.3 192.8L335.9 189.7L334.3 187.4L334.0 184.7L334.1 182.4L334.8 180.3L336.7 176.3L335.9 174.0L336.2 171.6L335.4 169.4L334.8 167.1L334.3 165.3L332.1 163.8L330.7 161.4L329.3 158.8L329.2 156.4L330.4 154.4L330.9 151.5L328.8 150.4L324.9 150.7L322.6 147.6L318.6 147.6L316.0 148.9L313.1 149.7L309.2 149.3L306.6 150.3L303.7 150.6L301.7 149.2L299.6 147.9L297.4 146.7L294.8 144.2L293.6 142.1L292.0 140.5L289.3 138.0L288.0 134.4L289.6 132.1L290.1 129.5L290.1 126.9L288.8 124.5L290.3 122.3L291.2 119.8L293.5 116.2L295.1 114.0L297.9 113.1L300.1 111.2L300.1 108.8L300.4 106.5L302.5 105.1L304.8 104.1L306.2 101.3L307.0 101.1L309.5 102.4L312.4 102.4L314.5 100.8L317.1 100.2L321.0 99.7L323.6 100.0L326.2 99.8L328.8 99.6L331.7 99.1L332.8 99.7L332.0 101.8L331.5 103.8L333.6 105.4L336.4 105.4L339.0 106.6L340.3 108.5L342.7 109.7L345.3 109.9L346.9 108.8L346.9 106.9L350.8 105.8L352.5 107.4L354.8 107.9L357.9 108.6L361.0 109.0L363.4 109.2L365.7 108.7L369.2 108.4L370.5 105.7L371.6 103.6L371.9 101.3L372.3 100.0L369.7 99.7L366.5 100.8L363.4 100.4L359.5 100.0L358.2 97.8L356.8 95.5L357.1 93.9L360.2 93.1L361.0 93.0L365.0 92.8L368.9 91.6L372.1 91.9L375.2 93.1L377.9 92.8L380.7 92.3L381.0 90.5L377.5 88.4L374.4 87.2L375.9 84.5L373.6 85.4L371.2 86.4L372.0 86.4L368.1 87.6L366.5 86.1L363.9 84.5L362.0 86.5L360.4 88.4L359.3 90.5L359.5 92.2L356.3 93.4L352.9 93.9L351.0 93.9L351.6 96.3L353.2 97.8L351.1 100.2L348.8 98.3L348.8 97.1L347.2 95.5L346.0 93.1L346.1 91.6L344.5 90.8L340.6 89.2L338.3 86.5L336.9 85.8L334.8 86.4L335.1 88.1L337.5 90.8L340.6 92.3L342.4 93.9L344.5 94.5L342.2 96.3L341.4 97.5L340.1 97.8L340.6 95.5L339.0 94.2L336.7 92.7L334.7 91.9L332.0 90.0L330.4 88.1L327.3 88.7L324.9 89.8L322.6 89.4L320.4 89.8L320.5 91.6L316.8 93.1L315.0 95.5L315.8 96.7L314.2 98.5L312.4 99.9L308.4 99.9Z" fill="none" stroke="#e7a012" stroke-width="1.3" stroke-linejoin="round"/>
<path d="M306.6 79.0L310.0 78.5L312.8 78.4L315.5 77.7L317.7 77.1L316.8 76.2L318.2 74.8L316.0 73.7L315.3 72.4L313.1 70.7L312.0 69.6L311.6 68.8L312.7 67.1L310.0 66.9L310.8 65.5L307.6 65.5L306.9 67.2L306.1 68.8L306.9 70.4L307.8 71.5L310.5 71.3L310.2 72.4L310.8 73.7L308.3 73.8L308.9 74.6L307.3 76.2L310.5 76.8L308.4 77.4Z" fill="#c8e3c8"/>
<g clip-path="url(#cgb)" stroke="#e7a012" stroke-width="1.05" stroke-linejoin="round">
<path d="M304.5 80.6L320.2 80.6L320.2 69.6L312.4 69.9L310.8 71.1L304.5 72.7Z" fill="#266a26"/>
<path d="M304.5 71.1L310.8 71.1L312.4 69.9L315.5 69.6L315.5 63.3L302.9 63.3Z" fill="#5cac5b"/>
<path d="M310.8 73.7L310.9 75.1L311.3 76.5L306.1 77.4L306.1 73.5Z" fill="#9cd09a"/>
</g>
<path d="M306.6 79.0L310.0 78.5L312.8 78.4L315.5 77.7L317.7 77.1L316.8 76.2L318.2 74.8L316.0 73.7L315.3 72.4L313.1 70.7L312.0 69.6L311.6 68.8L312.7 67.1L310.0 66.9L310.8 65.5L307.6 65.5L306.9 67.2L306.1 68.8L306.9 70.4L307.8 71.5L310.5 71.3L310.2 72.4L310.8 73.7L308.3 73.8L308.9 74.6L307.3 76.2L310.5 76.8L308.4 77.4Z" fill="none" stroke="#e7a012" stroke-width="1.3" stroke-linejoin="round"/>
<path d="M324.3 65.2L323.4 62.5L323.4 60.2L325.7 59.2L329.6 57.8L332.5 56.1L335.1 53.9L337.5 51.5L339.8 50.0L342.2 48.9L345.3 47.6L347.8 47.5L349.9 46.2L352.4 46.2L356.0 45.9L359.5 46.0L363.4 47.4L367.3 48.4" fill="none" stroke="#e7a012" stroke-width="1.9" stroke-linejoin="round"/>
<path d="M200.1 222.7L200.1 225.6L198.5 228.1L198.4 230.7L197.0 232.9L197.7 235.2L198.7 237.4L198.5 239.9L201.0 242.0L204.0 243.1L208.0 244.6L211.4 243.9" fill="none" stroke="#e7a012" stroke-width="1.9" stroke-linejoin="round"/>
<path d="M122.4 80.6L119.2 79.0L115.3 77.4L114.5 75.1L112.6 73.4L110.6 71.9L108.3 69.6L106.0 67.8L103.5 66.4L99.6 65.2L95.7 63.6L92.6 63.2L89.4 63.3L85.5 61.7L83.0 62.5L80.8 63.8" fill="none" stroke="#e7a012" stroke-width="1.9" stroke-linejoin="round"/>
<g stroke="#e7a012" stroke-width="1.2" stroke-linejoin="round">
<path d="M306.1 75.5L305.6 73.5L306.7 71.8L304.0 70.7L302.2 71.9L299.8 73.0L300.6 75.1L299.3 76.2L302.9 76.5Z" fill="#5cac5b"/>
<path d="M396.4 45.2L398.7 45.6L401.2 45.4L403.4 46.8L405.8 46.8L404.0 44.4L401.9 42.4L404.0 41.6L406.3 40.9L408.5 40.2L410.5 38.8L412.8 38.5L415.1 38.4L417.2 37.5L419.4 37.0L421.6 36.8L423.8 36.8L420.7 36.4L417.5 36.6L415.4 37.4L413.1 37.1L410.9 37.3L408.8 38.2L406.6 38.7L404.0 39.7L401.3 40.5L398.7 41.3L397.3 43.2Z" fill="#5cac5b"/>
<path d="M464.6 33.5L467.2 34.2L469.9 34.3L472.5 34.6L475.1 34.6L477.7 33.9L480.4 34.3L478.8 31.9L476.5 32.0L474.3 31.6L472.2 30.7L470.0 30.9L467.8 30.3L466.2 31.8Z" fill="#5cac5b"/>
<path d="M529.0 39.0L531.5 39.1L533.9 39.8L536.2 40.7L538.4 41.6L541.0 41.5L543.5 41.1L546.0 40.7L548.5 39.9L551.0 39.8L548.4 39.2L545.8 38.7L543.1 38.2L540.8 38.4L538.5 38.9L536.1 38.1L533.8 39.1L531.3 38.3Z" fill="#5cac5b"/>
<path d="M538.4 85.3L540.8 84.0L540.0 79.8L541.6 78.2L540.3 76.6L540.0 74.3L539.5 72.1L538.4 74.3L538.0 77.4L537.7 79.8L538.4 82.1Z" fill="#5cac5b"/>
<path d="M535.3 92.3L537.2 92.5L540.5 91.6L543.9 89.5L542.4 88.4L539.9 87.8L538.0 86.1L537.7 89.2L535.3 90.6Z" fill="#5cac5b"/>
<path d="M521.0 103.8L523.5 101.9L527.8 101.3L530.3 99.1L532.9 98.6L535.3 95.5L535.3 93.4L537.7 92.5L538.4 95.5L536.9 97.8L536.7 100.2L536.6 102.2L534.0 102.7L530.6 103.3L528.2 104.7L527.5 103.2L523.5 103.6Z" fill="#5cac5b"/>
<path d="M519.6 104.7L522.0 104.4L522.3 107.3L520.9 108.8L519.0 106.0Z" fill="#5cac5b"/>
<path d="M523.5 105.7L527.0 103.8L526.2 105.4Z" fill="#5cac5b"/>
<path d="M506.9 117.6L507.0 119.0L506.2 121.2L505.3 123.3L503.9 121.1L505.5 118.1Z" fill="#5cac5b"/>
<path d="M486.0 127.4L489.1 125.9L489.8 126.9L487.4 128.9Z" fill="#1b551b"/>
<path d="M440.8 142.1L441.4 142.1L442.4 144.1L444.1 145.7L442.7 148.1L441.1 147.3L441.5 144.7Z" fill="#c8e3c8"/>
<path d="M503.9 128.5L507.5 128.5L507.8 130.8L506.3 133.2L508.3 135.1L510.2 137.1L508.6 136.8L504.7 135.5L503.9 132.4Z" fill="#9cd09a"/>
<path d="M507.0 146.5L509.4 144.0L512.5 142.3L513.6 144.3L514.1 146.5L512.5 148.4L510.2 147.3Z" fill="#9cd09a"/>
<path d="M507.8 139.4L510.2 138.7L512.5 140.2L511.0 141.8L508.6 142.6Z" fill="#9cd09a"/>
<path d="M499.5 144.2L501.1 142.3L503.1 141.0L503.4 141.5L501.2 142.4Z" fill="#9cd09a"/>
<path d="M486.6 154.7L487.4 156.8L487.4 159.1L488.5 162.2L490.7 162.8L493.1 162.8L495.3 163.8L497.9 163.0L498.4 159.1L500.0 157.5L501.5 155.9L500.4 152.0L501.1 150.4L502.8 149.0L499.7 146.7L498.4 147.3L496.8 149.3L495.3 150.3L492.9 152.5L490.1 153.3L487.6 154.4Z" fill="#9cd09a"/>
<path d="M487.6 154.4L487.6 155.1L490.6 155.9L494.5 155.1L495.3 153.6L496.8 151.5L500.0 150.9L501.1 150.4L502.8 149.0L499.7 146.7L498.4 147.3L496.8 149.3L495.3 150.3L492.9 152.5L490.1 153.3Z" fill="#5cac5b"/>
<path d="M465.1 148.7L468.6 149.3L469.7 151.4L472.0 152.4L473.3 154.4L474.8 156.2L476.7 157.5L478.5 159.1L479.9 161.0L481.9 162.2L481.5 164.4L481.6 166.6L479.6 166.6L477.0 164.6L474.9 162.2L473.7 159.8L471.7 158.0L470.1 155.9L468.0 153.8L466.3 151.5Z" fill="#9cd09a"/>
<path d="M480.7 168.2L481.9 166.8L485.8 167.7L489.8 167.5L492.5 168.4L495.3 169.3L495.3 171.2L492.1 170.8L489.0 170.4L485.8 170.0L482.7 169.1Z" fill="#9cd09a"/>
<path d="M496.0 170.2L498.4 169.9L500.8 170.4L502.3 171.0L500.0 171.4L497.6 171.5Z" fill="#9cd09a"/>
<path d="M503.6 170.8L506.1 170.4L508.6 170.4L508.3 171.2L506.1 170.9L503.9 171.5Z" fill="#9cd09a"/>
<path d="M510.2 172.1L512.5 170.8L515.2 170.7L511.8 173.2L509.4 173.7Z" fill="#c8e3c8"/>
<path d="M502.0 161.4L502.9 159.1L503.1 156.7L504.7 155.6L507.1 155.9L509.4 154.8L511.8 155.1L508.5 155.4L505.5 156.7L504.7 158.8L509.1 158.9L506.3 159.1L505.5 161.4L506.9 163.2L508.6 164.6L507.0 166.1L506.3 163.8L504.7 161.9L504.5 166.3L503.0 166.1L502.2 163.8Z" fill="#9cd09a"/>
<path d="M515.7 154.7L517.2 155.1L516.5 157.5L517.6 158.8L515.7 158.3Z" fill="#9cd09a"/>
<path d="M516.5 162.5L520.9 162.5L519.6 163.5L516.9 163.2Z" fill="#9cd09a"/>
<path d="M521.2 159.5L523.5 159.0L525.9 158.8L527.2 160.7L528.2 162.7L530.5 162.0L532.2 160.3L534.5 161.1L536.9 161.6L537.0 164.1L537.0 166.7L537.1 169.2L536.9 171.8L533.7 170.4L532.3 168.5L531.8 166.1L529.5 165.8L527.5 164.6L524.3 163.8L522.7 161.9Z" fill="#9cd09a"/>
<path d="M536.9 161.6L539.5 162.9L542.4 163.5L544.7 166.1L547.1 167.2L547.9 170.1L549.6 171.7L551.0 173.7L548.7 172.9L546.3 173.2L543.8 171.7L541.6 169.7L539.2 172.1L536.9 171.8L536.6 169.2L536.9 166.7L536.5 164.1Z" fill="#e0f0df"/>
<path d="M548.6 166.1L551.3 165.0L554.1 164.1L554.6 166.1L551.0 167.2Z" fill="#e0f0df"/>
<path d="M392.9 176.3L393.3 179.3L394.8 181.8L393.2 185.8L392.0 188.0L391.6 190.5L390.1 193.3L389.3 196.4L386.1 197.5L384.3 193.6L384.7 191.3L384.9 188.9L384.4 185.0L387.7 182.3L389.6 181.1L390.9 179.2Z" fill="#e0f0df"/>
<path d="M366.2 102.4L369.7 101.6L368.7 102.9L366.8 103.0Z" fill="#c8e3c8"/>
<path d="M352.4 101.8L354.6 102.4L356.8 102.1L354.0 102.6Z" fill="#9cd09a"/>
<path d="M335.0 97.7L337.5 97.6L340.0 97.4L339.2 99.9L337.2 98.5Z" fill="#3a8836"/>
<path d="M328.4 93.0L330.9 93.1L330.6 96.0L328.7 96.3Z" fill="#3a8836"/>
<path d="M329.0 90.1L330.4 90.1L330.1 92.5L329.3 92.2Z" fill="#3a8836"/>
<path d="M333.1 69.9L335.1 69.4L335.0 71.1L333.1 70.7Z" fill="#5cac5b"/>
<path d="M319.3 95.0L320.8 95.0L320.2 95.8Z" fill="#3a8836"/>
<path d="M275.5 130.8L277.0 133.9L279.4 131.6Z" fill="#9cd09a"/>
</g>
<g stroke="#e7a012" stroke-width="1.2" stroke-linejoin="round">
<path d="M494.0 192.0L496.0 190.5L498.4 190.0L502.3 188.9L504.4 188.0L506.3 186.5L507.5 184.2L509.4 183.4L511.8 180.3L514.9 179.2L518.0 180.7L519.6 177.9L521.2 176.7L523.5 175.4L525.9 175.8L528.2 176.3L530.3 176.8L529.0 178.7L528.2 181.1L530.2 182.6L532.3 183.8L534.5 185.0L536.6 185.0L536.7 182.3L536.9 179.7L537.8 177.1L539.2 174.3L539.5 176.7L540.8 178.7L543.6 181.1L544.6 183.7L544.7 186.5L547.1 188.5L549.4 190.5L552.3 193.6L554.1 195.3L555.7 197.2L556.4 199.8L556.7 202.4L555.9 204.6L555.7 207.0L553.9 208.5L553.0 210.7L552.3 213.6L551.0 216.4L547.1 217.2L545.2 218.9L542.4 217.5L539.6 217.2L536.9 217.3L534.8 215.6L532.2 213.5L531.8 210.1L529.0 212.1L527.8 211.7L525.9 209.0L523.4 208.2L521.2 207.0L518.5 207.3L516.0 207.9L513.3 208.2L511.6 209.8L509.4 210.7L506.7 211.2L503.9 210.9L500.4 212.6L496.2 211.5L496.0 207.7L494.9 205.8L494.9 203.4L493.7 201.5L493.2 198.6L493.5 196.4L493.4 194.2Z" fill="#266a26"/>
<path d="M542.7 221.4L545.5 222.0L548.3 221.7L547.9 225.3L546.0 226.0L543.5 223.8Z" fill="#266a26"/>
<path d="M586.6 211.5L589.5 213.7L591.5 215.6L595.7 216.7L594.8 219.0L593.2 219.7L590.6 222.8L589.6 222.2L590.2 220.0L588.4 219.2L589.5 216.4L588.6 213.6Z" fill="#5cac5b"/>
<path d="M586.6 221.1L589.2 223.0L587.6 225.0L584.3 227.4L583.2 229.6L579.9 230.7L576.9 229.4L579.7 226.6L581.7 225.4L583.7 224.2Z" fill="#5cac5b"/>
<path d="M574.5 190.5L577.7 192.5L576.9 192.4Z" fill="#c8e3c8"/>
<path d="M593.9 185.0L595.7 184.7L595.0 186.1Z" fill="#c8e3c8"/>
<path d="M562.0 170.1L564.9 170.8L567.5 172.4L568.3 173.2L565.1 171.9Z" fill="#c8e3c8"/>
</g>
<g fill="#e7a012">
<rect x="541.0" y="134.8" width="1.4" height="1.4"/>
<rect x="562.1" y="144.6" width="1.4" height="1.4"/>
<rect x="570.2" y="147.8" width="1.4" height="1.4"/>
<rect x="586.2" y="152.7" width="1.4" height="1.4"/>
<rect x="589.7" y="159.2" width="1.4" height="1.4"/>
<rect x="560.2" y="167.2" width="1.4" height="1.4"/>
<rect x="566.2" y="170.2" width="1.4" height="1.4"/>
<rect x="570.2" y="172.7" width="1.4" height="1.4"/>
<rect x="576.7" y="180.2" width="1.4" height="1.4"/>
<rect x="596.2" y="181.9" width="1.4" height="1.4"/>
<rect x="573.2" y="190.0" width="1.4" height="1.4"/>
<rect x="403.0" y="188.2" width="1.4" height="1.4"/>
<rect x="406.2" y="186.2" width="1.4" height="1.4"/>
<rect x="170.2" y="157.2" width="1.4" height="1.4"/>
<rect x="42.7" y="178.2" width="1.4" height="1.4"/>
<rect x="76.7" y="184.2" width="1.4" height="1.4"/>
<rect x="94.0" y="171.2" width="1.4" height="1.4"/>
<rect x="38.8" y="189.7" width="1.4" height="1.4"/>
<rect x="218.0" y="132.9" width="1.4" height="1.4"/>
<rect x="219.2" y="136.2" width="1.4" height="1.4"/>
<rect x="216.2" y="129.2" width="1.4" height="1.4"/>
<rect x="531.6" y="141.9" width="1.4" height="1.4"/>
</g>
</svg><svg width="644" height="333" style="position:absolute;left:0;top:0">
<g transform="translate(-239,-69)">
 <g fill="#053f05">
  <rect x="263" y="86" width="16" height="48" rx="8"/>
  <rect x="255" y="102" width="33" height="16" rx="8"/>
  <rect x="263" y="139" width="16" height="48" rx="8"/>
 </g>
 <g fill="#fff">
  <path d="M271 89 L276 97 L266 97Z"/>
  <path d="M271 131 L276 123 L266 123Z"/>
  <path d="M258 110 L265 105.5 L265 114.5Z"/>
  <path d="M285 110 L278 105.5 L278 114.5Z"/>
  <rect x="266" y="146" width="10" height="2.2"/>
  <rect x="270" y="142" width="2.2" height="10"/>
  <rect x="266" y="177" width="10" height="2.2"/>
 </g>
 <g fill="none" stroke="#9c9ef8" stroke-width="0.9">
  <circle cx="271" cy="162.5" r="7"/>
  <ellipse cx="271" cy="162.5" rx="3.5" ry="7"/>
  <path d="M264 162.5H278M265 159H277M265 166H277"/>
 </g>
</g>
</svg>
<div class="abs" style="left:8px;top:306px;width:136px;height:18px;background:linear-gradient(to right,#ffffff 0%,#c8e0c8 25%,#8cbf8c 54%,#4a984a 77%,#0c780c 86%,#003800 100%)"></div>
<div class="abs" style="left:9.5px;top:306.3px;font-size:11px;color:#111;line-height:12px">0</div>
<div class="abs" style="left:90px;top:306.3px;font-size:11px;color:#1a1a1a;line-height:12px">78,327</div>
</div>
  <div class="abs" style="left:0;top:387px;width:644px;height:1px;background:#dcdcdc"></div>
  <div class="abs h" style="left:18px;top:395px">Report View by Selection</div>
  <div class="abs blue" style="left:561px;top:397px;font-size:13px;font-weight:bold;letter-spacing:-0.2px">Customize</div>
  <div class="abs" style="left:0;top:420px;width:644px;height:1px;background:#d0d0d0"></div>
  <div class="abs" style="left:0;top:421px;width:639px;height:33px;background:#f4f4f4"></div>
<div class="abs" style="left:0;top:454px;width:639px;height:23px;background:#fafafa"></div>
<div class="abs" style="left:0;top:477px;width:639px;height:1px;background:#e6e6e6"></div>
<div class="abs num" style="right:591px;top:457px">1</div>
<div class="abs num" style="right:349.5px;top:457px">17,755</div>
<div class="abs num" style="right:250px;top:457px">231,460</div>
<div class="abs num" style="right:145px;top:457px">13.04</div>
<div class="abs nm" style="left:72px;top:458.0px">ENGINEERING</div>
<div class="abs bar" style="left:544px;top:457px"><b style="width:88px"></b><span style="color:#fff">152</span></div>
<div class="abs" style="left:0;top:478px;width:639px;height:30px;background:#fafafa"></div>
<div class="abs" style="left:0;top:508px;width:639px;height:1px;background:#e6e6e6"></div>
<div class="abs num" style="right:591px;top:484px">2</div>
<div class="abs num" style="right:349.5px;top:484px">7,078</div>
<div class="abs num" style="right:250px;top:484px">169,222</div>
<div class="abs num" style="right:145px;top:484px">23.91</div>
<div class="abs nm" style="left:72px;top:480.0px">MATERIALS<br>SCIENCE</div>
<div class="abs bar" style="left:544px;top:484px"><b style="width:61px"></b><span style="color:#3a4a6a">106</span></div>
<div class="abs" style="left:0;top:509px;width:639px;height:22px;background:#fafafa"></div>
<div class="abs" style="left:0;top:531px;width:639px;height:1px;background:#e6e6e6"></div>
<div class="abs num" style="right:591px;top:511px">3</div>
<div class="abs num" style="right:349.5px;top:511px">2,322</div>
<div class="abs num" style="right:250px;top:511px">51,706</div>
<div class="abs num" style="right:145px;top:511px">22.27</div>
<div class="abs nm" style="left:72px;top:512.5px">CHEMISTRY</div>
<div class="abs bar" style="left:544px;top:511px"><b style="width:30px"></b><span style="color:#3a4a6a">52</span></div>
<div class="abs" style="left:0;top:532px;width:639px;height:30px;background:#fafafa"></div>
<div class="abs" style="left:0;top:562px;width:639px;height:1px;background:#e6e6e6"></div>
<div class="abs num" style="right:591px;top:538px">4</div>
<div class="abs num" style="right:349.5px;top:538px">3,446</div>
<div class="abs num" style="right:250px;top:538px">50,076</div>
<div class="abs num" style="right:145px;top:538px">14.53</div>
<div class="abs nm" style="left:72px;top:534.0px">COMPUTER<br>SCIENCE</div>
<div class="abs bar" style="left:544px;top:539px"><b style="width:27px"></b><span style="color:#3a4a6a">46</span></div>
<div class="abs" style="left:0;top:563px;width:639px;height:22px;background:#fafafa"></div>
<div class="abs" style="left:0;top:585px;width:639px;height:1px;background:#e6e6e6"></div>
<div class="abs num" style="right:591px;top:565px">5</div>
<div class="abs num" style="right:349.5px;top:565px">3,302</div>
<div class="abs num" style="right:250px;top:565px">42,613</div>
<div class="abs num" style="right:145px;top:565px">12.91</div>
<div class="abs nm" style="left:72px;top:566.5px">PHYSICS</div>
<div class="abs bar" style="left:544px;top:566px"><b style="width:20px"></b><span style="color:#3a4a6a">35</span></div>
<div class="abs" style="left:0;top:586px;width:639px;height:30px;background:#fafafa"></div>
<div class="abs" style="left:0;top:616px;width:639px;height:1px;background:#e6e6e6"></div>
<div class="abs num" style="right:591px;top:592px">6</div>
<div class="abs num" style="right:349.5px;top:592px">675</div>
<div class="abs num" style="right:250px;top:592px">12,861</div>
<div class="abs num" style="right:145px;top:592px">19.05</div>
<div class="abs nm" style="left:72px;top:588.0px">ENVIRONMENT/E<br>COLOGY</div>
<div class="abs bar" style="left:544px;top:593px"><b style="width:8px"></b><span style="color:#3a4a6a">13</span></div>
<div class="abs" style="left:0;top:617px;width:639px;height:23px;background:#fafafa"></div>
<div class="abs" style="left:0;top:640px;width:639px;height:1px;background:#e6e6e6"></div>
<div class="abs num" style="right:591px;top:619px">7</div>
<div class="abs num" style="right:349.5px;top:619px">1,552</div>
<div class="abs num" style="right:250px;top:619px">11,294</div>
<div class="abs num" style="right:145px;top:619px">7.28</div>
<div class="abs nm" style="left:72px;top:621.0px">MATHEMATICS</div>
<div class="abs bar" style="left:544px;top:620px"><b style="width:19px"></b><span style="color:#3a4a6a">32</span></div>
<div class="abs" style="left:0;top:641px;width:639px;height:41px;background:#fafafa"></div>
<div class="abs" style="left:0;top:682px;width:639px;height:1px;background:#e6e6e6"></div>
<div class="abs num" style="right:591px;top:653px">8</div>
<div class="abs num" style="right:349.5px;top:653px">431</div>
<div class="abs num" style="right:250px;top:653px">8,766</div>
<div class="abs num" style="right:145px;top:653px">20.34</div>
<div class="abs nm" style="left:72px;top:643.0px">SOCIAL<br>SCIENCES,<br>GENERAL</div>
<div class="abs bar" style="left:544px;top:653px"><b style="width:17px"></b><span style="color:#3a4a6a">29</span></div>
<div class="abs" style="left:0;top:683px;width:639px;height:30px;background:#fafafa"></div>
<div class="abs" style="left:0;top:713px;width:639px;height:1px;background:#e6e6e6"></div>
<div class="abs num" style="right:591px;top:689px">9</div>
<div class="abs num" style="right:349.5px;top:689px">485</div>
<div class="abs num" style="right:250px;top:689px">7,414</div>
<div class="abs num" style="right:145px;top:689px">15.29</div>
<div class="abs nm" style="left:72px;top:685.0px">ECONOMICS &amp;<br>BUSINESS</div>
<div class="abs bar" style="left:544px;top:690px"><b style="width:8px"></b><span style="color:#3a4a6a">13</span></div>
<div class="abs" style="left:0;top:714px;width:639px;height:30px;background:#fafafa"></div>
<div class="abs" style="left:0;top:744px;width:639px;height:1px;background:#e6e6e6"></div>
<div class="abs num" style="right:591px;top:720px">10</div>
<div class="abs num" style="right:349.5px;top:720px">295</div>
<div class="abs num" style="right:250px;top:720px">4,470</div>
<div class="abs num" style="right:145px;top:720px">15.15</div>
<div class="abs nm" style="left:72px;top:716.0px">CLINICAL<br>MEDICINE</div>
<div class="abs bar" style="left:544px;top:721px"><b style="width:1px"></b><span style="color:#3a4a6a">2</span></div>
<div class="abs" style="left:0;top:745px;width:639px;height:23px;background:#fafafa"></div>
<div class="abs" style="left:0;top:768px;width:639px;height:1px;background:#e6e6e6"></div>
<div class="abs num" style="right:591px;top:747px">0</div>
<div class="abs num" style="right:349.5px;top:747px">38,755</div>
<div class="abs num" style="right:250px;top:747px">606,060</div>
<div class="abs num" style="right:145px;top:747px">15.64</div>
<div class="abs nm" style="left:72px;top:749.0px">ALL FIELDS</div>
<div class="abs bar" style="left:544px;top:748px"><b style="width:88px"></b><span style="color:#fff">499</span></div>

<div class="abs th" style="left:12px;top:423px">Total:</div><div class="abs th" style="left:17px;top:436.5px">11</div>
<div class="abs th" style="left:73px;top:430px">Research Fields</div>
<div class="abs th" style="left:194.5px;top:423px">Web of Science</div><div class="abs th" style="left:202.5px;top:436.5px">Documents</div>
<div class="abs th" style="left:322px;top:431px;color:#4e76a6">Cites <svg width="8" height="5" style="vertical-align:2px"><path d="M0 0H7L3.5 4Z" fill="#6f95c6"/></svg></div>
<div class="abs th" style="left:411px;top:431px">Cites/Paper</div>
<div class="abs th" style="left:533px;top:431px">Top Papers</div>

 </div>
</div>
<div class="abs" style="right:104px;top:808.5px;font-size:11px;font-style:italic;color:#1a1a1a;text-align:right;line-height:13px">InCites Essential Science Indicators dataset updated Sep 11, 2025.<br>For more information <span style="color:#0e5f8c">Click Here</span></div>
</body></html>
